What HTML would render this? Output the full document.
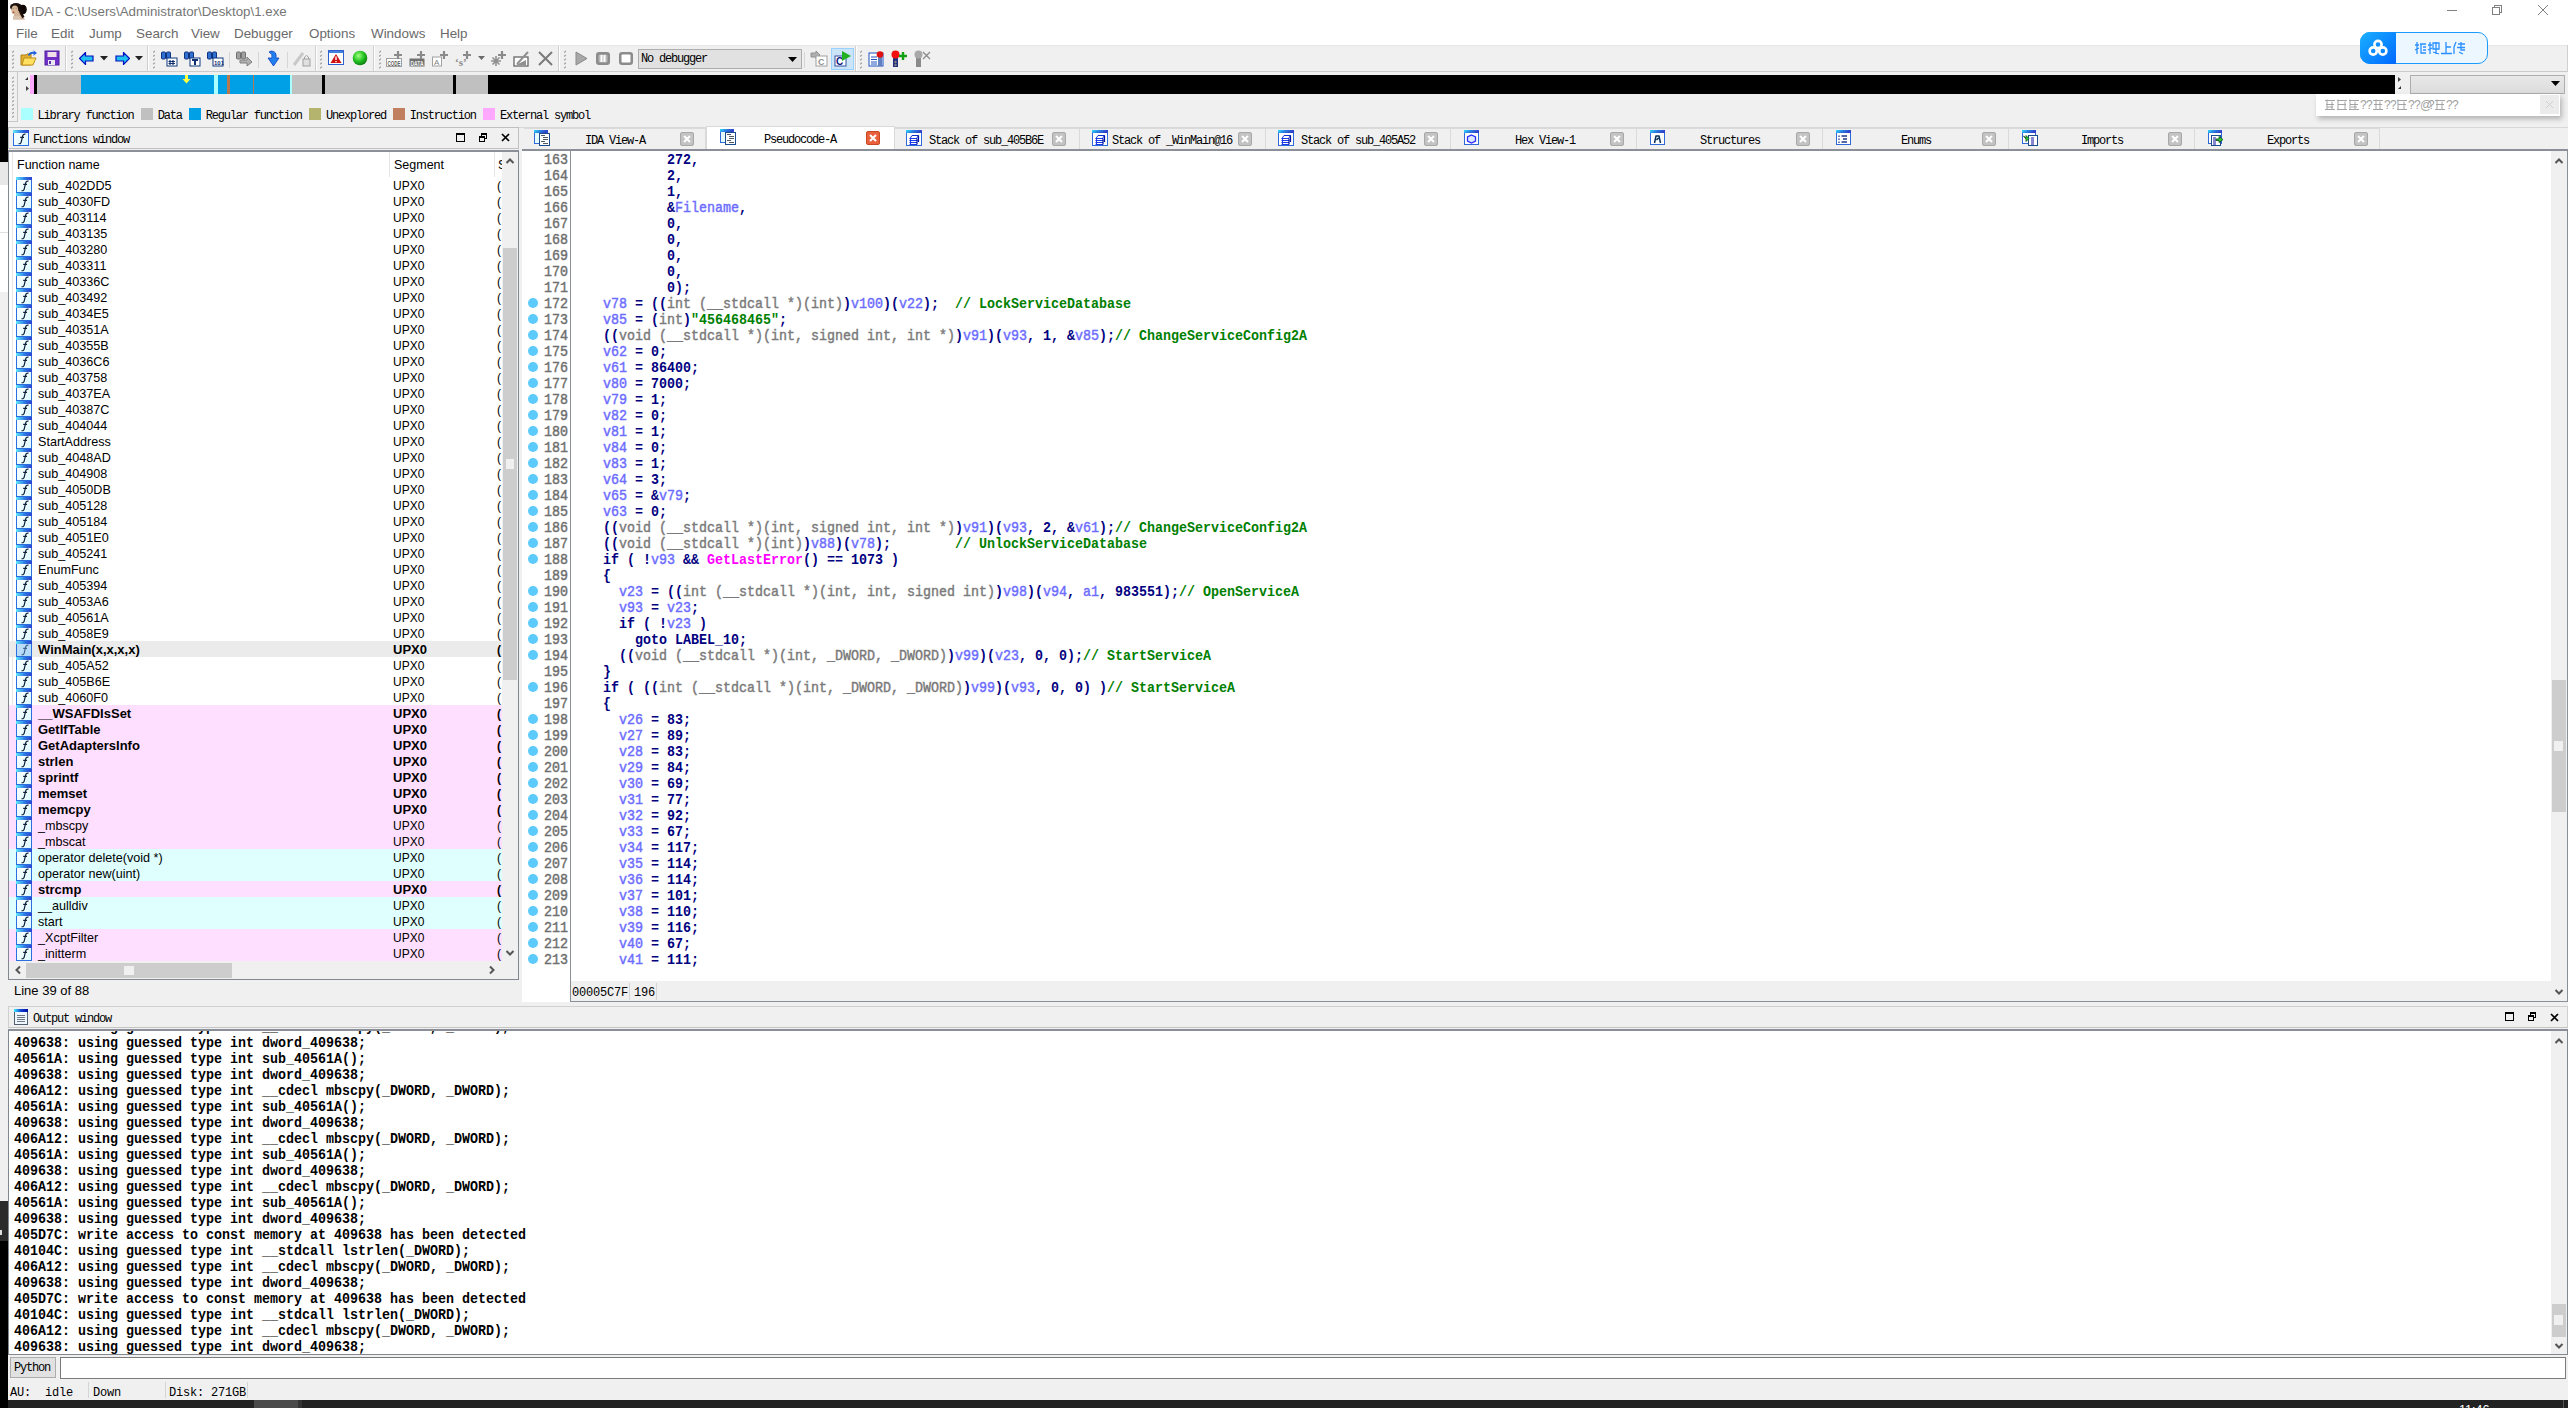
<!DOCTYPE html>
<html><head><meta charset="utf-8"><title>IDA</title><style>
*{box-sizing:border-box;margin:0;padding:0}
html,body{width:2568px;height:1408px;overflow:hidden;background:#f0f0f0}
body{position:relative;font-family:"Liberation Sans",sans-serif}
.a{position:absolute}
.t{position:absolute;white-space:pre}
.ui{font-family:"Liberation Sans",sans-serif;font-size:12px;line-height:16px;color:#000}
.sim{font-family:"Liberation Mono",monospace;font-size:12px;letter-spacing:-1.2px;line-height:16px;color:#000}
.st7{font-family:"Liberation Mono",monospace;font-size:12px;letter-spacing:-0.2px;line-height:16px;color:#000}
.code{font-family:"Liberation Mono",monospace;font-weight:bold;font-size:13.33px;line-height:16px;white-space:pre;transform:translateY(1px) scaleY(1.11);transform-origin:0 0}
.n{color:#000080}.v{color:#6c6cff;font-weight:normal;-webkit-text-stroke:0.4px #6c6cff}.ty{color:#7a7a7a;font-weight:normal;-webkit-text-stroke:0.4px #7a7a7a}.s{color:#008000}.c{color:#008000}.fn{color:#ff00ff}
.ln{color:#6e6e6e;font-weight:normal;-webkit-text-stroke:0.4px #6e6e6e}
.dot{position:absolute;width:10px;height:10px;border-radius:5px;background:#5ccbfb}
.fic{position:absolute;width:16px;height:16px;border:1px solid #2a6ee0;border-top:none;background:linear-gradient(135deg,#ffffff,#dcfaff)}
.fic:before{content:"";position:absolute;left:-1px;right:-1px;top:0;height:3px;background:linear-gradient(90deg,#60e8ff,#2a70e0 60%,#3040d0)}
.fic svg{position:absolute;left:2px;top:3px}
.sb{position:absolute;background:#f0f0f0}
.thumb{position:absolute;background:#cdcdcd}
.grip{position:absolute;background:#f0f0f0}
.grp{position:absolute;width:4px;background-image:linear-gradient(135deg,transparent 1.2px,#9c9c9c 1.2px,#9c9c9c 2.6px,transparent 2.6px);background-size:4px 3.9px}
.sep{position:absolute;width:1px;background:#d8d8d8}
</style></head><body>
<div class="a" style="left:8px;top:0px;width:2560px;height:45px;background:#fff"></div>
<svg class="a" style="left:6px;top:0px" width="24" height="22"><path d="M7 19.5Q8 16 8.5 13H14Q15.5 17 19.5 19.5Z" fill="#c8a488"/><ellipse cx="11" cy="17.2" rx="4" ry="2" fill="#d8c4ae"/><rect x="9" y="10" width="5" height="5" fill="#d0b090"/><ellipse cx="10" cy="7" rx="6" ry="4" fill="#1c100c"/><ellipse cx="17" cy="9.5" rx="3.8" ry="4.8" fill="#100806"/><path d="M13 8Q15 14 17.5 17.5" stroke="#1a0e0a" stroke-width="2.5" fill="none"/><ellipse cx="8.8" cy="10" rx="3.4" ry="4.6" fill="#d6b898"/><ellipse cx="7.5" cy="12.3" rx="1" ry="0.8" fill="#a04a38"/><path d="M6.5 8.3H8M9.5 8.3H11" stroke="#9a8070" stroke-width="0.8"/></svg>
<div class="t ui" style="left:31px;top:4px;font-size:13.3px;color:#767676">IDA - C:\Users\Administrator\Desktop\1.exe</div>
<div class="a" style="left:2447px;top:10px;width:10px;height:1px;background:#808080"></div>
<div class="a" style="left:2494px;top:5px;width:8px;height:8px;border:1px solid #808080"></div>
<div class="a" style="left:2492px;top:7px;width:8px;height:8px;border:1px solid #808080;background:#fff"></div>
<svg class="a" style="left:2537px;top:4px" width="12" height="12"><path d="M1 1L11 11M11 1L1 11" stroke="#808080" stroke-width="1"/></svg>
<div class="t ui" style="left:16px;top:26px;font-size:13.4px;color:#6a6a6a">File</div>
<div class="t ui" style="left:51px;top:26px;font-size:13.4px;color:#6a6a6a">Edit</div>
<div class="t ui" style="left:89px;top:26px;font-size:13.4px;color:#6a6a6a">Jump</div>
<div class="t ui" style="left:136px;top:26px;font-size:13.4px;color:#6a6a6a">Search</div>
<div class="t ui" style="left:191px;top:26px;font-size:13.4px;color:#6a6a6a">View</div>
<div class="t ui" style="left:234px;top:26px;font-size:13.4px;color:#6a6a6a">Debugger</div>
<div class="t ui" style="left:309px;top:26px;font-size:13.4px;color:#6a6a6a">Options</div>
<div class="t ui" style="left:371px;top:26px;font-size:13.4px;color:#6a6a6a">Windows</div>
<div class="t ui" style="left:440px;top:26px;font-size:13.4px;color:#6a6a6a">Help</div>
<div class="a" style="left:8px;top:45px;width:2560px;height:1px;background:#e6e6e6"></div>
<div class="a" style="left:8px;top:46px;width:2560px;height:25px;background:#f0f0f0"></div>
<div class="a" style="left:8px;top:71px;width:2560px;height:1px;background:#cacaca"></div>
<div class="a" style="left:2567px;top:45px;width:1px;height:27px;background:#d0d0d0"></div>
<div class="a" style="left:65px;top:46px;width:1px;height:25px;background:#cfcfcf"></div>
<div class="a" style="left:66px;top:46px;width:1px;height:25px;background:#ffffff"></div>
<div class="a" style="left:147px;top:46px;width:1px;height:25px;background:#cfcfcf"></div>
<div class="a" style="left:148px;top:46px;width:1px;height:25px;background:#ffffff"></div>
<div class="a" style="left:315px;top:46px;width:1px;height:25px;background:#cfcfcf"></div>
<div class="a" style="left:316px;top:46px;width:1px;height:25px;background:#ffffff"></div>
<div class="a" style="left:373px;top:46px;width:1px;height:25px;background:#cfcfcf"></div>
<div class="a" style="left:374px;top:46px;width:1px;height:25px;background:#ffffff"></div>
<div class="a" style="left:558px;top:46px;width:1px;height:25px;background:#cfcfcf"></div>
<div class="a" style="left:559px;top:46px;width:1px;height:25px;background:#ffffff"></div>
<div class="a" style="left:855px;top:46px;width:1px;height:25px;background:#cfcfcf"></div>
<div class="a" style="left:856px;top:46px;width:1px;height:25px;background:#ffffff"></div>
<div class="a" style="left:229px;top:52px;width:1px;height:16px;background:#d6d6d6"></div>
<div class="a" style="left:258px;top:52px;width:1px;height:16px;background:#d6d6d6"></div>
<div class="a" style="left:287px;top:52px;width:1px;height:16px;background:#d6d6d6"></div>
<div class="a" style="left:804px;top:52px;width:1px;height:16px;background:#d6d6d6"></div>
<svg class="a" style="left:12px;top:50px" width="4" height="21"><path d="M0.2 2.6L1.8 1.0M0.2 6.5L1.8 4.9M0.2 10.4L1.8 8.8M0.2 14.299999999999999L1.8 12.7M0.2 18.2L1.8 16.6" stroke="#a0a0a0" stroke-width="1.3"/></svg>
<svg class="a" style="left:71px;top:50px" width="4" height="21"><path d="M0.2 2.6L1.8 1.0M0.2 6.5L1.8 4.9M0.2 10.4L1.8 8.8M0.2 14.299999999999999L1.8 12.7M0.2 18.2L1.8 16.6" stroke="#a0a0a0" stroke-width="1.3"/></svg>
<svg class="a" style="left:153px;top:50px" width="4" height="21"><path d="M0.2 2.6L1.8 1.0M0.2 6.5L1.8 4.9M0.2 10.4L1.8 8.8M0.2 14.299999999999999L1.8 12.7M0.2 18.2L1.8 16.6" stroke="#a0a0a0" stroke-width="1.3"/></svg>
<svg class="a" style="left:320px;top:50px" width="4" height="21"><path d="M0.2 2.6L1.8 1.0M0.2 6.5L1.8 4.9M0.2 10.4L1.8 8.8M0.2 14.299999999999999L1.8 12.7M0.2 18.2L1.8 16.6" stroke="#a0a0a0" stroke-width="1.3"/></svg>
<svg class="a" style="left:379px;top:50px" width="4" height="21"><path d="M0.2 2.6L1.8 1.0M0.2 6.5L1.8 4.9M0.2 10.4L1.8 8.8M0.2 14.299999999999999L1.8 12.7M0.2 18.2L1.8 16.6" stroke="#a0a0a0" stroke-width="1.3"/></svg>
<svg class="a" style="left:564px;top:50px" width="4" height="21"><path d="M0.2 2.6L1.8 1.0M0.2 6.5L1.8 4.9M0.2 10.4L1.8 8.8M0.2 14.299999999999999L1.8 12.7M0.2 18.2L1.8 16.6" stroke="#a0a0a0" stroke-width="1.3"/></svg>
<svg class="a" style="left:860px;top:50px" width="4" height="21"><path d="M0.2 2.6L1.8 1.0M0.2 6.5L1.8 4.9M0.2 10.4L1.8 8.8M0.2 14.299999999999999L1.8 12.7M0.2 18.2L1.8 16.6" stroke="#a0a0a0" stroke-width="1.3"/></svg>
<svg class="a" style="left:20px;top:50px" width="18" height="17" viewBox="0 0 18 17"><path d="M1 5H6L7 4H11V15H1Z" fill="#e0b030" stroke="#b08010"/><path d="M2 15L4 8H16L13 15Z" fill="#ffe060" stroke="#c09020"/><path d="M8 5Q10 1 14 2L13 0L17 3L13 6L14 4Q11 3 9 6Z" fill="#2060e0"/></svg>
<svg class="a" style="left:44px;top:50px" width="17" height="17" viewBox="0 0 17 17"><rect x="1" y="1" width="14" height="14" fill="#7030c8" stroke="#5020a0"/><rect x="3.5" y="2" width="9" height="5" fill="#f0e0e8"/><rect x="4" y="10" width="7" height="5" fill="#e8e8f0"/><rect x="5" y="11" width="2" height="3" fill="#6030b0"/></svg>
<svg class="a" style="left:79px;top:52px" width="15" height="13" viewBox="0 0 15 13"><path d="M0.5 6.5L6.5 0.5V4H14V9H6.5V12.5Z" fill="#20c0f0" stroke="#0010c0" stroke-width="1.2"/></svg>
<svg class="a" style="left:115px;top:52px" width="15" height="13" viewBox="0 0 15 13"><path d="M14.5 6.5L8.5 0.5V4H1V9H8.5V12.5Z" fill="#20c0f0" stroke="#0010c0" stroke-width="1.2"/></svg>
<svg class="a" style="left:100px;top:56px" width="9" height="5" viewBox="0 0 9 5"><path d="M0 0H8L4 4.5Z" fill="#222"/></svg>
<svg class="a" style="left:135px;top:56px" width="9" height="5" viewBox="0 0 9 5"><path d="M0 0H8L4 4.5Z" fill="#222"/></svg>
<svg class="a" style="left:161px;top:50px" width="17" height="17" viewBox="0 0 17 17"><rect x="0.5" y="2" width="4" height="7" rx="1" fill="#3070d0" stroke="#103080"/><rect x="5.5" y="2" width="4" height="7" rx="1" fill="#3070d0" stroke="#103080"/><rect x="6" y="8" width="10" height="8" fill="#fff" stroke="#103880"/><path d="M9 10V15M12 10V15M7.5 11.5H14M7.5 13.5H14" stroke="#103070" stroke-width="1.2"/></svg>
<svg class="a" style="left:184px;top:50px" width="17" height="17" viewBox="0 0 17 17"><rect x="0.5" y="2" width="4" height="7" rx="1" fill="#3070d0" stroke="#103080"/><rect x="5.5" y="2" width="4" height="7" rx="1" fill="#3070d0" stroke="#103080"/><rect x="6" y="8" width="10" height="8" fill="#fff" stroke="#103880"/><path d="M8 10H14M11 10V15" stroke="#103070" stroke-width="2"/></svg>
<svg class="a" style="left:207px;top:50px" width="17" height="17" viewBox="0 0 17 17"><rect x="0.5" y="2" width="4" height="7" rx="1" fill="#3070d0" stroke="#103080"/><rect x="5.5" y="2" width="4" height="7" rx="1" fill="#3070d0" stroke="#103080"/><rect x="6" y="8" width="10" height="8" fill="#fff" stroke="#103880"/><text x="7" y="15" font-size="6" font-family="Liberation Sans" font-weight="bold" fill="#103070">101</text></svg>
<svg class="a" style="left:236px;top:50px" width="17" height="17" viewBox="0 0 17 17"><rect x="0.5" y="2" width="4" height="7" rx="1" fill="#a0a0a0" stroke="#707070"/><rect x="5.5" y="2" width="4" height="7" rx="1" fill="#a0a0a0" stroke="#707070"/><path d="M4 10H11V7L16 12L11 16V13H4Z" fill="#b0b0b0" stroke="#808080"/></svg>
<svg class="a" style="left:266px;top:50px" width="15" height="17" viewBox="0 0 15 17"><path d="M5 1Q11 1 10 8H13L7.5 16L2 8H6Q7 4 3 2Z" fill="#2080f0" stroke="#1040c0" stroke-width="0.8"/></svg>
<svg class="a" style="left:293px;top:50px" width="18" height="17" viewBox="0 0 18 17"><path d="M1 15L10 3" stroke="#c8c8c8" stroke-width="3"/><rect x="10" y="9" width="7" height="7" fill="#e0e0e0" stroke="#a0a0a0"/><path d="M11.5 9V7Q13.5 4 15.5 7V9" fill="none" stroke="#a0a0a0"/></svg>
<svg class="a" style="left:328px;top:50px" width="17" height="16" viewBox="0 0 17 16"><rect x="0.5" y="0.5" width="15" height="14" fill="#fff" stroke="#3060d0"/><rect x="1" y="1" width="14" height="2" fill="#4080e0"/><path d="M8 4L13.5 13H2.5Z" fill="#d01010"/><rect x="7.3" y="6.5" width="1.4" height="3.5" fill="#fff"/><rect x="7.3" y="11" width="1.4" height="1.2" fill="#fff"/></svg>
<svg class="a" style="left:352px;top:50px" width="16" height="16" viewBox="0 0 16 16"><defs><radialGradient id="gg" cx="40%" cy="35%" r="65%"><stop offset="0" stop-color="#a0ff80"/><stop offset="0.6" stop-color="#20c020"/><stop offset="1" stop-color="#108010"/></radialGradient></defs><circle cx="8" cy="8" r="7.3" fill="url(#gg)"/></svg>
<svg class="a" style="left:386px;top:50px" width="18" height="17" viewBox="0 0 18 17"><rect x="0.5" y="8.5" width="15" height="8" fill="#fff" stroke="#a0a0a0"/><text x="1.5" y="15.5" font-size="7" textLength="13" lengthAdjust="spacingAndGlyphs" font-family="Liberation Sans" font-weight="bold" fill="#606060">CODE</text><path d="M12 1V9M8 5H16" stroke="#8a8a8a" stroke-width="2.2"/></svg>
<svg class="a" style="left:409px;top:50px" width="18" height="17" viewBox="0 0 18 17"><rect x="0.5" y="8.5" width="15" height="8" fill="#707070"/><text x="1.5" y="15.5" font-size="7" textLength="13" lengthAdjust="spacingAndGlyphs" font-family="Liberation Sans" font-weight="bold" fill="#f0f0f0">DATA</text><path d="M12 1V9M8 5H16" stroke="#8a8a8a" stroke-width="2.2"/></svg>
<svg class="a" style="left:432px;top:50px" width="18" height="17" viewBox="0 0 18 17"><rect x="0.5" y="7" width="9" height="9" fill="#fff" stroke="#a0a0a0"/><text x="2" y="15" font-size="8" font-family="Liberation Sans" fill="#808080">A</text><path d="M12 1V9M8 5H16" stroke="#8a8a8a" stroke-width="2.2"/></svg>
<svg class="a" style="left:455px;top:50px" width="18" height="17" viewBox="0 0 18 17"><text x="0" y="16" font-size="11" font-family="Liberation Serif" font-weight="bold" fill="#8a8a8a">‘s’</text><path d="M12 1V9M8 5H16" stroke="#8a8a8a" stroke-width="2.2"/></svg>
<svg class="a" style="left:478px;top:56px" width="8" height="5" viewBox="0 0 8 5"><path d="M0 0H7L3.5 4Z" fill="#6a6a6a"/></svg>
<svg class="a" style="left:490px;top:50px" width="18" height="17" viewBox="0 0 18 17"><path d="M6 6V16M1 11H11M2.5 7.5L9.5 14.5M9.5 7.5L2.5 14.5" stroke="#909090" stroke-width="1.6"/><path d="M12 1V9M8 5H16" stroke="#8a8a8a" stroke-width="2.2"/></svg>
<svg class="a" style="left:513px;top:50px" width="18" height="17" viewBox="0 0 18 17"><rect x="1" y="7" width="14" height="9" fill="#fff" stroke="#707070" stroke-width="1.4"/><path d="M4 14L15 2" stroke="#909090" stroke-width="2"/><path d="M3 15H13V10Z" fill="#909090"/></svg>
<svg class="a" style="left:537px;top:50px" width="17" height="17" viewBox="0 0 17 17"><path d="M2 2L15 15M15 2L2 15" stroke="#7a7a7a" stroke-width="2"/></svg>
<svg class="a" style="left:574px;top:50px" width="15" height="17" viewBox="0 0 15 17"><path d="M2 2L13 8.5L2 15Z" fill="#a8a8a8" stroke="#8a8a8a"/></svg>
<svg class="a" style="left:595px;top:50px" width="16" height="17" viewBox="0 0 16 17"><rect x="1" y="2" width="14" height="13" rx="3" fill="#8c8c8c"/><rect x="3.5" y="4.5" width="9" height="8" rx="1.5" fill="#b8b8b8"/><rect x="5.5" y="5" width="2" height="7" fill="#fff"/><rect x="8.5" y="5" width="2" height="7" fill="#fff"/></svg>
<svg class="a" style="left:618px;top:50px" width="16" height="17" viewBox="0 0 16 17"><rect x="1" y="2" width="14" height="13" rx="3" fill="#8c8c8c"/><rect x="3.5" y="4.5" width="9" height="8" rx="1" fill="#fff"/></svg>
<div class="a" style="left:638px;top:49px;width:164px;height:20px;border:1px solid #adadad;background:#e1e1e1"></div>
<div class="t sim" style="left:641px;top:51px;">No debugger</div>
<svg class="a" style="left:788px;top:57px" width="9" height="6" viewBox="0 0 9 6"><path d="M0 0H9L4.5 5Z" fill="#000"/></svg>
<svg class="a" style="left:810px;top:50px" width="18" height="17" viewBox="0 0 18 17"><path d="M1 3H6V1L10 5L6 9V7H1Z" fill="#b0b0b0" stroke="#909090"/><rect x="6" y="6" width="11" height="10" fill="#fff" stroke="#a0a0a0"/><text x="8" y="15" font-size="9" font-weight="bold" font-family="Liberation Sans" fill="#909090">C</text></svg>
<div class="a" style="left:831px;top:48px;width:23px;height:22px;background:#cce4f7;border:1px solid #99d1ff"></div>
<svg class="a" style="left:834px;top:50px" width="18" height="17" viewBox="0 0 18 17"><rect x="1" y="6" width="11" height="10" fill="#fff" stroke="#3050a0"/><text x="2" y="15" font-size="10" font-weight="bold" font-family="Liberation Sans" fill="#102080">C</text><path d="M8 1L17 6L8 11Z" fill="#20b020"/></svg>
<svg class="a" style="left:868px;top:50px" width="18" height="17" viewBox="0 0 18 17"><rect x="1" y="3" width="14" height="13" fill="#fff" stroke="#2050c0"/><path d="M3 7H9M3 9.5H9M3 12H9M3 14H9" stroke="#2050c0"/><rect x="10" y="7" width="4" height="9" fill="#6080c0"/><circle cx="12" cy="4.5" r="3.3" fill="#e01010"/></svg>
<svg class="a" style="left:891px;top:50px" width="18" height="17" viewBox="0 0 18 17"><rect x="2" y="6" width="5" height="11" fill="#203080"/><circle cx="4.5" cy="4.5" r="4" fill="#f01010"/><circle cx="4.5" cy="12" r="1.2" fill="#808080"/><circle cx="4.5" cy="15" r="1.2" fill="#808080"/><path d="M12 2V10M8 6H16" stroke="#10a010" stroke-width="2.4"/></svg>
<svg class="a" style="left:914px;top:50px" width="18" height="17" viewBox="0 0 18 17"><rect x="2" y="6" width="5" height="11" fill="#8a8a8a"/><circle cx="4.5" cy="4.5" r="4" fill="#a8a8a8"/><path d="M9 2L16 9M16 2L9 9" stroke="#8a8a8a" stroke-width="1.3"/></svg>
<div class="a" style="left:8px;top:72px;width:10px;height:50px;border-right:1px solid #c8c8c8;border-bottom:1px solid #c8c8c8"></div>
<svg class="a" style="left:12px;top:76px" width="4" height="44"><path d="M0.2 2.6L1.8 1.0M0.2 6.5L1.8 4.9M0.2 10.4L1.8 8.8M0.2 14.299999999999999L1.8 12.7M0.2 18.2L1.8 16.6M0.2 22.1L1.8 20.5M0.2 26.0L1.8 24.4M0.2 29.900000000000002L1.8 28.3M0.2 33.8L1.8 32.2M0.2 37.7L1.8 36.1M0.2 41.6L1.8 40.0" stroke="#a0a0a0" stroke-width="1.3"/></svg>
<svg class="a" style="left:24px;top:76px" width="6" height="16"><path d="M1 4L4 1L4 4Z" fill="#333"/><path d="M2 10L5 12.5L2 15Z" fill="#444"/></svg>
<div class="a" style="left:30px;top:75px;width:4px;height:19px;background:#ffa8ff"></div>
<div class="a" style="left:34px;top:75px;width:3px;height:19px;background:#000"></div>
<div class="a" style="left:37px;top:75px;width:44px;height:19px;background:#c0c0c0"></div>
<div class="a" style="left:81px;top:75px;width:133px;height:19px;background:#00a0e6"></div>
<div class="a" style="left:214px;top:75px;width:4px;height:19px;background:#aaffff"></div>
<div class="a" style="left:218px;top:75px;width:72px;height:19px;background:#00a0e6"></div>
<div class="a" style="left:227px;top:75px;width:3px;height:19px;background:#b87850"></div>
<div class="a" style="left:253px;top:75px;width:1px;height:19px;background:#b87850"></div>
<div class="a" style="left:290px;top:75px;width:2px;height:19px;background:#aaffff"></div>
<div class="a" style="left:292px;top:75px;width:30px;height:19px;background:#c0c0c0"></div>
<div class="a" style="left:322px;top:75px;width:3px;height:19px;background:#000"></div>
<div class="a" style="left:325px;top:75px;width:128px;height:19px;background:#c0c0c0"></div>
<div class="a" style="left:453px;top:75px;width:3px;height:19px;background:#000"></div>
<div class="a" style="left:456px;top:75px;width:32px;height:19px;background:#c0c0c0"></div>
<div class="a" style="left:488px;top:75px;width:1907px;height:19px;background:#000"></div>
<svg class="a" style="left:182px;top:75px" width="9" height="9"><path d="M3 0H6V4H8.5L4.5 8.5L0.5 4H3Z" fill="#ffff40"/></svg>
<svg class="a" style="left:2397px;top:76px" width="6" height="16"><path d="M1 1L4 3.5L1 6Z" fill="#444"/><path d="M1 13L4 10L4 13Z" fill="#333"/></svg>
<div class="a" style="left:2410px;top:75px;width:155px;height:19px;border:1px solid #adadad;background:linear-gradient(#e8e8e8,#dcdcdc)"></div>
<svg class="a" style="left:2551px;top:81px" width="9" height="6"><path d="M0 0H9L4.5 5Z" fill="#000"/></svg>
<div class="a" style="left:21px;top:108px;width:12px;height:12px;background:#aaffff"></div>
<div class="t sim" style="left:37.6px;top:108px;">Library function</div>
<div class="a" style="left:141px;top:108px;width:12px;height:12px;background:#c0c0c0"></div>
<div class="t sim" style="left:157.7px;top:108px;">Data</div>
<div class="a" style="left:189px;top:108px;width:12px;height:12px;background:#00a0e6"></div>
<div class="t sim" style="left:205.8px;top:108px;">Regular function</div>
<div class="a" style="left:309px;top:108px;width:12px;height:12px;background:#b4b46e"></div>
<div class="t sim" style="left:326px;top:108px;">Unexplored</div>
<div class="a" style="left:393px;top:108px;width:12px;height:12px;background:#c08060"></div>
<div class="t sim" style="left:409.7px;top:108px;">Instruction</div>
<div class="a" style="left:483px;top:108px;width:12px;height:12px;background:#ffa8ff"></div>
<div class="t sim" style="left:500px;top:108px;">External symbol</div>
<div class="a" style="left:8px;top:127px;width:2560px;height:1px;background:#d8d8d8"></div>
<div class="a" style="left:2360px;top:32px;width:128px;height:32px;border-radius:10px;background:#edf7ff;border:1.5px solid #1a9cff"></div>
<div class="a" style="left:2360px;top:32px;width:36px;height:32px;border-radius:10px 0 0 10px;background:linear-gradient(135deg,#1ab0ff,#0068ff)"></div>
<svg class="a" style="left:2367px;top:38px" width="22" height="20"><g fill="none" stroke="#fff" stroke-width="2.6"><circle cx="11" cy="6.5" r="3.6"/><circle cx="6.2" cy="13" r="3.6"/><circle cx="15.8" cy="13" r="3.6"/></g></svg>
<svg class="a" style="left:2414px;top:41px" width="52" height="14"><g stroke="#2a90ff" stroke-width="1.3" fill="none"><path d="M1 4H5M3 1V13M1 9L5 7M6 3H12M7 3V12H12M9 6H12M9 9H12"/><path d="M14 4H18M16 1V13M14 9L18 7M19 2H25V8H19ZM22 1V13M19 11L25 13"/><path d="M32 1V12M32 6H37M27 12.5H38"/><path d="M42 1L40 6V13M44 3H51M43 6.5H51M47 1V9H51M45 11L49 13"/></g></svg>
<div class="a" style="left:2316px;top:94px;width:244px;height:22px;background:#fff;box-shadow:2px 3px 5px rgba(0,0,0,0.25)"></div>
<div class="a" style="left:2540px;top:95px;width:19px;height:19px;background:#ebebeb"></div>
<svg class="a" style="left:2545px;top:100px" width="9" height="9"><path d="M1 1L8 8M8 1L1 8" stroke="#d0d0d0" stroke-width="1"/></svg>
<svg class="a" style="left:2322px;top:98px" width="145" height="14"><g stroke="#a4a4a4" stroke-width="1" fill="none"><path d="M3 2.5H13 M4 6.5H12 M3 11.5H13 M5 1.5V11.5 M10 3.5V11.5 M5 9.0H11"/><path d="M15 2.5H25 M16 6.5H24 M15 11.5H25 M16 1.5V11.5 M23 3.5V11.5"/><path d="M27 2.5H37 M28 6.5H36 M27 11.5H37 M28 1.5V11.5 M33 3.5V11.5 M29 9.0H35"/><path d="M51 2.5H61 M52 6.5H60 M51 11.5H61 M54 1.5V11.5 M58 3.5V11.5"/><path d="M75 2.5H85 M76 6.5H84 M75 11.5H85 M76 1.5V11.5 M82 3.5V11.5"/><path d="M113 2.5H123 M114 6.5H122 M113 11.5H123 M115 1.5V11.5 M120 3.5V11.5"/></g><text x="38" y="11" font-family="Liberation Sans" font-size="12" fill="#a0a0a0">?</text><text x="44" y="11" font-family="Liberation Sans" font-size="12" fill="#a0a0a0">?</text><text x="62" y="11" font-family="Liberation Sans" font-size="12" fill="#a0a0a0">?</text><text x="68" y="11" font-family="Liberation Sans" font-size="12" fill="#a0a0a0">?</text><text x="86" y="11" font-family="Liberation Sans" font-size="12" fill="#a0a0a0">?</text><text x="92" y="11" font-family="Liberation Sans" font-size="12" fill="#a0a0a0">?</text><text x="98" y="11" font-family="Liberation Sans" font-size="12" fill="#a0a0a0">@</text><text x="106" y="11" font-family="Liberation Sans" font-size="12" fill="#a0a0a0">?</text><text x="124" y="11" font-family="Liberation Sans" font-size="12" fill="#a0a0a0">?</text><text x="130" y="11" font-family="Liberation Sans" font-size="12" fill="#a0a0a0">?</text></svg>
<div class="a" style="left:8px;top:127px;width:511px;height:22px;background:#f0f0f0;border:1px solid #c0c0c0"></div>
<div class="fic" style="left:13px;top:130px"><svg width="12" height="12"><path d="M9.5 1.2Q7.2 0.6 6.6 3.2L5.2 9.2Q4.7 11.2 2.6 10.6M4.2 4.4H8" fill="none" stroke="#10203a" stroke-width="1.2"/></svg></div>
<div class="t sim" style="left:33px;top:132px;">Functions window</div>
<div class="a" style="left:456px;top:133px;width:9px;height:9px;border:1px solid #000;border-top:2px solid #000"></div>
<div class="a" style="left:481px;top:133px;width:6px;height:6px;border:1px solid #000;border-top:2px solid #000"></div>
<div class="a" style="left:479px;top:136px;width:6px;height:6px;border:1px solid #000;border-top:2px solid #000;background:#f0f0f0"></div>
<svg class="a" style="left:501px;top:133px" width="9" height="9"><path d="M1 1L8 8M8 1L1 8" stroke="#000" stroke-width="1.7"/></svg>
<div class="a" style="left:8px;top:150px;width:511px;height:830px;background:#fff;border:1px solid #828790;border-top:2px solid #8a8f98"></div>
<div class="a" style="left:12px;top:152px;width:1px;height:809px;background:#e6e6e6"></div>
<div class="t ui" style="left:17px;top:157px;font-size:12.5px">Function name</div>
<div class="t ui" style="left:394px;top:157px;font-size:12.5px">Segment</div>
<div class="t ui" style="left:498px;top:157px;font-size:12.5px;width:4px;overflow:hidden">S</div>
<div class="a" style="left:389px;top:152px;width:1px;height:25px;background:#e5e5e5"></div>
<div class="a" style="left:494px;top:152px;width:1px;height:25px;background:#e5e5e5"></div>
<div class="fic" style="left:16px;top:177px"><svg width="12" height="12"><path d="M9.5 1.2Q7.2 0.6 6.6 3.2L5.2 9.2Q4.7 11.2 2.6 10.6M4.2 4.4H8" fill="none" stroke="#10203a" stroke-width="1.2"/></svg></div>
<div class="t ui" style="left:38px;top:178px;font-size:12.6px;">sub_402DD5</div>
<div class="t ui" style="left:393px;top:178px;">UPX0</div>
<div class="t ui" style="left:497px;top:178px;width:5px;overflow:hidden;">(</div>
<div class="fic" style="left:16px;top:193px"><svg width="12" height="12"><path d="M9.5 1.2Q7.2 0.6 6.6 3.2L5.2 9.2Q4.7 11.2 2.6 10.6M4.2 4.4H8" fill="none" stroke="#10203a" stroke-width="1.2"/></svg></div>
<div class="t ui" style="left:38px;top:194px;font-size:12.6px;">sub_4030FD</div>
<div class="t ui" style="left:393px;top:194px;">UPX0</div>
<div class="t ui" style="left:497px;top:194px;width:5px;overflow:hidden;">(</div>
<div class="fic" style="left:16px;top:209px"><svg width="12" height="12"><path d="M9.5 1.2Q7.2 0.6 6.6 3.2L5.2 9.2Q4.7 11.2 2.6 10.6M4.2 4.4H8" fill="none" stroke="#10203a" stroke-width="1.2"/></svg></div>
<div class="t ui" style="left:38px;top:210px;font-size:12.6px;">sub_403114</div>
<div class="t ui" style="left:393px;top:210px;">UPX0</div>
<div class="t ui" style="left:497px;top:210px;width:5px;overflow:hidden;">(</div>
<div class="fic" style="left:16px;top:225px"><svg width="12" height="12"><path d="M9.5 1.2Q7.2 0.6 6.6 3.2L5.2 9.2Q4.7 11.2 2.6 10.6M4.2 4.4H8" fill="none" stroke="#10203a" stroke-width="1.2"/></svg></div>
<div class="t ui" style="left:38px;top:226px;font-size:12.6px;">sub_403135</div>
<div class="t ui" style="left:393px;top:226px;">UPX0</div>
<div class="t ui" style="left:497px;top:226px;width:5px;overflow:hidden;">(</div>
<div class="fic" style="left:16px;top:241px"><svg width="12" height="12"><path d="M9.5 1.2Q7.2 0.6 6.6 3.2L5.2 9.2Q4.7 11.2 2.6 10.6M4.2 4.4H8" fill="none" stroke="#10203a" stroke-width="1.2"/></svg></div>
<div class="t ui" style="left:38px;top:242px;font-size:12.6px;">sub_403280</div>
<div class="t ui" style="left:393px;top:242px;">UPX0</div>
<div class="t ui" style="left:497px;top:242px;width:5px;overflow:hidden;">(</div>
<div class="fic" style="left:16px;top:257px"><svg width="12" height="12"><path d="M9.5 1.2Q7.2 0.6 6.6 3.2L5.2 9.2Q4.7 11.2 2.6 10.6M4.2 4.4H8" fill="none" stroke="#10203a" stroke-width="1.2"/></svg></div>
<div class="t ui" style="left:38px;top:258px;font-size:12.6px;">sub_403311</div>
<div class="t ui" style="left:393px;top:258px;">UPX0</div>
<div class="t ui" style="left:497px;top:258px;width:5px;overflow:hidden;">(</div>
<div class="fic" style="left:16px;top:273px"><svg width="12" height="12"><path d="M9.5 1.2Q7.2 0.6 6.6 3.2L5.2 9.2Q4.7 11.2 2.6 10.6M4.2 4.4H8" fill="none" stroke="#10203a" stroke-width="1.2"/></svg></div>
<div class="t ui" style="left:38px;top:274px;font-size:12.6px;">sub_40336C</div>
<div class="t ui" style="left:393px;top:274px;">UPX0</div>
<div class="t ui" style="left:497px;top:274px;width:5px;overflow:hidden;">(</div>
<div class="fic" style="left:16px;top:289px"><svg width="12" height="12"><path d="M9.5 1.2Q7.2 0.6 6.6 3.2L5.2 9.2Q4.7 11.2 2.6 10.6M4.2 4.4H8" fill="none" stroke="#10203a" stroke-width="1.2"/></svg></div>
<div class="t ui" style="left:38px;top:290px;font-size:12.6px;">sub_403492</div>
<div class="t ui" style="left:393px;top:290px;">UPX0</div>
<div class="t ui" style="left:497px;top:290px;width:5px;overflow:hidden;">(</div>
<div class="fic" style="left:16px;top:305px"><svg width="12" height="12"><path d="M9.5 1.2Q7.2 0.6 6.6 3.2L5.2 9.2Q4.7 11.2 2.6 10.6M4.2 4.4H8" fill="none" stroke="#10203a" stroke-width="1.2"/></svg></div>
<div class="t ui" style="left:38px;top:306px;font-size:12.6px;">sub_4034E5</div>
<div class="t ui" style="left:393px;top:306px;">UPX0</div>
<div class="t ui" style="left:497px;top:306px;width:5px;overflow:hidden;">(</div>
<div class="fic" style="left:16px;top:321px"><svg width="12" height="12"><path d="M9.5 1.2Q7.2 0.6 6.6 3.2L5.2 9.2Q4.7 11.2 2.6 10.6M4.2 4.4H8" fill="none" stroke="#10203a" stroke-width="1.2"/></svg></div>
<div class="t ui" style="left:38px;top:322px;font-size:12.6px;">sub_40351A</div>
<div class="t ui" style="left:393px;top:322px;">UPX0</div>
<div class="t ui" style="left:497px;top:322px;width:5px;overflow:hidden;">(</div>
<div class="fic" style="left:16px;top:337px"><svg width="12" height="12"><path d="M9.5 1.2Q7.2 0.6 6.6 3.2L5.2 9.2Q4.7 11.2 2.6 10.6M4.2 4.4H8" fill="none" stroke="#10203a" stroke-width="1.2"/></svg></div>
<div class="t ui" style="left:38px;top:338px;font-size:12.6px;">sub_40355B</div>
<div class="t ui" style="left:393px;top:338px;">UPX0</div>
<div class="t ui" style="left:497px;top:338px;width:5px;overflow:hidden;">(</div>
<div class="fic" style="left:16px;top:353px"><svg width="12" height="12"><path d="M9.5 1.2Q7.2 0.6 6.6 3.2L5.2 9.2Q4.7 11.2 2.6 10.6M4.2 4.4H8" fill="none" stroke="#10203a" stroke-width="1.2"/></svg></div>
<div class="t ui" style="left:38px;top:354px;font-size:12.6px;">sub_4036C6</div>
<div class="t ui" style="left:393px;top:354px;">UPX0</div>
<div class="t ui" style="left:497px;top:354px;width:5px;overflow:hidden;">(</div>
<div class="fic" style="left:16px;top:369px"><svg width="12" height="12"><path d="M9.5 1.2Q7.2 0.6 6.6 3.2L5.2 9.2Q4.7 11.2 2.6 10.6M4.2 4.4H8" fill="none" stroke="#10203a" stroke-width="1.2"/></svg></div>
<div class="t ui" style="left:38px;top:370px;font-size:12.6px;">sub_403758</div>
<div class="t ui" style="left:393px;top:370px;">UPX0</div>
<div class="t ui" style="left:497px;top:370px;width:5px;overflow:hidden;">(</div>
<div class="fic" style="left:16px;top:385px"><svg width="12" height="12"><path d="M9.5 1.2Q7.2 0.6 6.6 3.2L5.2 9.2Q4.7 11.2 2.6 10.6M4.2 4.4H8" fill="none" stroke="#10203a" stroke-width="1.2"/></svg></div>
<div class="t ui" style="left:38px;top:386px;font-size:12.6px;">sub_4037EA</div>
<div class="t ui" style="left:393px;top:386px;">UPX0</div>
<div class="t ui" style="left:497px;top:386px;width:5px;overflow:hidden;">(</div>
<div class="fic" style="left:16px;top:401px"><svg width="12" height="12"><path d="M9.5 1.2Q7.2 0.6 6.6 3.2L5.2 9.2Q4.7 11.2 2.6 10.6M4.2 4.4H8" fill="none" stroke="#10203a" stroke-width="1.2"/></svg></div>
<div class="t ui" style="left:38px;top:402px;font-size:12.6px;">sub_40387C</div>
<div class="t ui" style="left:393px;top:402px;">UPX0</div>
<div class="t ui" style="left:497px;top:402px;width:5px;overflow:hidden;">(</div>
<div class="fic" style="left:16px;top:417px"><svg width="12" height="12"><path d="M9.5 1.2Q7.2 0.6 6.6 3.2L5.2 9.2Q4.7 11.2 2.6 10.6M4.2 4.4H8" fill="none" stroke="#10203a" stroke-width="1.2"/></svg></div>
<div class="t ui" style="left:38px;top:418px;font-size:12.6px;">sub_404044</div>
<div class="t ui" style="left:393px;top:418px;">UPX0</div>
<div class="t ui" style="left:497px;top:418px;width:5px;overflow:hidden;">(</div>
<div class="fic" style="left:16px;top:433px"><svg width="12" height="12"><path d="M9.5 1.2Q7.2 0.6 6.6 3.2L5.2 9.2Q4.7 11.2 2.6 10.6M4.2 4.4H8" fill="none" stroke="#10203a" stroke-width="1.2"/></svg></div>
<div class="t ui" style="left:38px;top:434px;font-size:12.6px;">StartAddress</div>
<div class="t ui" style="left:393px;top:434px;">UPX0</div>
<div class="t ui" style="left:497px;top:434px;width:5px;overflow:hidden;">(</div>
<div class="fic" style="left:16px;top:449px"><svg width="12" height="12"><path d="M9.5 1.2Q7.2 0.6 6.6 3.2L5.2 9.2Q4.7 11.2 2.6 10.6M4.2 4.4H8" fill="none" stroke="#10203a" stroke-width="1.2"/></svg></div>
<div class="t ui" style="left:38px;top:450px;font-size:12.6px;">sub_4048AD</div>
<div class="t ui" style="left:393px;top:450px;">UPX0</div>
<div class="t ui" style="left:497px;top:450px;width:5px;overflow:hidden;">(</div>
<div class="fic" style="left:16px;top:465px"><svg width="12" height="12"><path d="M9.5 1.2Q7.2 0.6 6.6 3.2L5.2 9.2Q4.7 11.2 2.6 10.6M4.2 4.4H8" fill="none" stroke="#10203a" stroke-width="1.2"/></svg></div>
<div class="t ui" style="left:38px;top:466px;font-size:12.6px;">sub_404908</div>
<div class="t ui" style="left:393px;top:466px;">UPX0</div>
<div class="t ui" style="left:497px;top:466px;width:5px;overflow:hidden;">(</div>
<div class="fic" style="left:16px;top:481px"><svg width="12" height="12"><path d="M9.5 1.2Q7.2 0.6 6.6 3.2L5.2 9.2Q4.7 11.2 2.6 10.6M4.2 4.4H8" fill="none" stroke="#10203a" stroke-width="1.2"/></svg></div>
<div class="t ui" style="left:38px;top:482px;font-size:12.6px;">sub_4050DB</div>
<div class="t ui" style="left:393px;top:482px;">UPX0</div>
<div class="t ui" style="left:497px;top:482px;width:5px;overflow:hidden;">(</div>
<div class="fic" style="left:16px;top:497px"><svg width="12" height="12"><path d="M9.5 1.2Q7.2 0.6 6.6 3.2L5.2 9.2Q4.7 11.2 2.6 10.6M4.2 4.4H8" fill="none" stroke="#10203a" stroke-width="1.2"/></svg></div>
<div class="t ui" style="left:38px;top:498px;font-size:12.6px;">sub_405128</div>
<div class="t ui" style="left:393px;top:498px;">UPX0</div>
<div class="t ui" style="left:497px;top:498px;width:5px;overflow:hidden;">(</div>
<div class="fic" style="left:16px;top:513px"><svg width="12" height="12"><path d="M9.5 1.2Q7.2 0.6 6.6 3.2L5.2 9.2Q4.7 11.2 2.6 10.6M4.2 4.4H8" fill="none" stroke="#10203a" stroke-width="1.2"/></svg></div>
<div class="t ui" style="left:38px;top:514px;font-size:12.6px;">sub_405184</div>
<div class="t ui" style="left:393px;top:514px;">UPX0</div>
<div class="t ui" style="left:497px;top:514px;width:5px;overflow:hidden;">(</div>
<div class="fic" style="left:16px;top:529px"><svg width="12" height="12"><path d="M9.5 1.2Q7.2 0.6 6.6 3.2L5.2 9.2Q4.7 11.2 2.6 10.6M4.2 4.4H8" fill="none" stroke="#10203a" stroke-width="1.2"/></svg></div>
<div class="t ui" style="left:38px;top:530px;font-size:12.6px;">sub_4051E0</div>
<div class="t ui" style="left:393px;top:530px;">UPX0</div>
<div class="t ui" style="left:497px;top:530px;width:5px;overflow:hidden;">(</div>
<div class="fic" style="left:16px;top:545px"><svg width="12" height="12"><path d="M9.5 1.2Q7.2 0.6 6.6 3.2L5.2 9.2Q4.7 11.2 2.6 10.6M4.2 4.4H8" fill="none" stroke="#10203a" stroke-width="1.2"/></svg></div>
<div class="t ui" style="left:38px;top:546px;font-size:12.6px;">sub_405241</div>
<div class="t ui" style="left:393px;top:546px;">UPX0</div>
<div class="t ui" style="left:497px;top:546px;width:5px;overflow:hidden;">(</div>
<div class="fic" style="left:16px;top:561px"><svg width="12" height="12"><path d="M9.5 1.2Q7.2 0.6 6.6 3.2L5.2 9.2Q4.7 11.2 2.6 10.6M4.2 4.4H8" fill="none" stroke="#10203a" stroke-width="1.2"/></svg></div>
<div class="t ui" style="left:38px;top:562px;font-size:12.6px;">EnumFunc</div>
<div class="t ui" style="left:393px;top:562px;">UPX0</div>
<div class="t ui" style="left:497px;top:562px;width:5px;overflow:hidden;">(</div>
<div class="fic" style="left:16px;top:577px"><svg width="12" height="12"><path d="M9.5 1.2Q7.2 0.6 6.6 3.2L5.2 9.2Q4.7 11.2 2.6 10.6M4.2 4.4H8" fill="none" stroke="#10203a" stroke-width="1.2"/></svg></div>
<div class="t ui" style="left:38px;top:578px;font-size:12.6px;">sub_405394</div>
<div class="t ui" style="left:393px;top:578px;">UPX0</div>
<div class="t ui" style="left:497px;top:578px;width:5px;overflow:hidden;">(</div>
<div class="fic" style="left:16px;top:593px"><svg width="12" height="12"><path d="M9.5 1.2Q7.2 0.6 6.6 3.2L5.2 9.2Q4.7 11.2 2.6 10.6M4.2 4.4H8" fill="none" stroke="#10203a" stroke-width="1.2"/></svg></div>
<div class="t ui" style="left:38px;top:594px;font-size:12.6px;">sub_4053A6</div>
<div class="t ui" style="left:393px;top:594px;">UPX0</div>
<div class="t ui" style="left:497px;top:594px;width:5px;overflow:hidden;">(</div>
<div class="fic" style="left:16px;top:609px"><svg width="12" height="12"><path d="M9.5 1.2Q7.2 0.6 6.6 3.2L5.2 9.2Q4.7 11.2 2.6 10.6M4.2 4.4H8" fill="none" stroke="#10203a" stroke-width="1.2"/></svg></div>
<div class="t ui" style="left:38px;top:610px;font-size:12.6px;">sub_40561A</div>
<div class="t ui" style="left:393px;top:610px;">UPX0</div>
<div class="t ui" style="left:497px;top:610px;width:5px;overflow:hidden;">(</div>
<div class="fic" style="left:16px;top:625px"><svg width="12" height="12"><path d="M9.5 1.2Q7.2 0.6 6.6 3.2L5.2 9.2Q4.7 11.2 2.6 10.6M4.2 4.4H8" fill="none" stroke="#10203a" stroke-width="1.2"/></svg></div>
<div class="t ui" style="left:38px;top:626px;font-size:12.6px;">sub_4058E9</div>
<div class="t ui" style="left:393px;top:626px;">UPX0</div>
<div class="t ui" style="left:497px;top:626px;width:5px;overflow:hidden;">(</div>
<div class="a" style="left:9px;top:641px;width:493px;height:16px;background:#ebebeb"></div>
<div class="fic" style="left:16px;top:641px"><svg width="12" height="12"><path d="M9.5 1.2Q7.2 0.6 6.6 3.2L5.2 9.2Q4.7 11.2 2.6 10.6M4.2 4.4H8" fill="none" stroke="#10203a" stroke-width="1.2"/></svg></div>
<div class="t ui" style="left:38px;top:642px;font-weight:bold;font-size:13px;">WinMain(x,x,x,x)</div>
<div class="t ui" style="left:393px;top:642px;font-weight:bold;font-size:13px;">UPX0</div>
<div class="t ui" style="left:497px;top:642px;width:5px;overflow:hidden;font-weight:bold;">(</div>
<div class="fic" style="left:16px;top:657px"><svg width="12" height="12"><path d="M9.5 1.2Q7.2 0.6 6.6 3.2L5.2 9.2Q4.7 11.2 2.6 10.6M4.2 4.4H8" fill="none" stroke="#10203a" stroke-width="1.2"/></svg></div>
<div class="t ui" style="left:38px;top:658px;font-size:12.6px;">sub_405A52</div>
<div class="t ui" style="left:393px;top:658px;">UPX0</div>
<div class="t ui" style="left:497px;top:658px;width:5px;overflow:hidden;">(</div>
<div class="fic" style="left:16px;top:673px"><svg width="12" height="12"><path d="M9.5 1.2Q7.2 0.6 6.6 3.2L5.2 9.2Q4.7 11.2 2.6 10.6M4.2 4.4H8" fill="none" stroke="#10203a" stroke-width="1.2"/></svg></div>
<div class="t ui" style="left:38px;top:674px;font-size:12.6px;">sub_405B6E</div>
<div class="t ui" style="left:393px;top:674px;">UPX0</div>
<div class="t ui" style="left:497px;top:674px;width:5px;overflow:hidden;">(</div>
<div class="fic" style="left:16px;top:689px"><svg width="12" height="12"><path d="M9.5 1.2Q7.2 0.6 6.6 3.2L5.2 9.2Q4.7 11.2 2.6 10.6M4.2 4.4H8" fill="none" stroke="#10203a" stroke-width="1.2"/></svg></div>
<div class="t ui" style="left:38px;top:690px;font-size:12.6px;">sub_4060F0</div>
<div class="t ui" style="left:393px;top:690px;">UPX0</div>
<div class="t ui" style="left:497px;top:690px;width:5px;overflow:hidden;">(</div>
<div class="a" style="left:9px;top:705px;width:493px;height:16px;background:#ffdfff"></div>
<div class="fic" style="left:16px;top:705px"><svg width="12" height="12"><path d="M9.5 1.2Q7.2 0.6 6.6 3.2L5.2 9.2Q4.7 11.2 2.6 10.6M4.2 4.4H8" fill="none" stroke="#10203a" stroke-width="1.2"/></svg></div>
<div class="t ui" style="left:38px;top:706px;font-weight:bold;font-size:13px;">__WSAFDIsSet</div>
<div class="t ui" style="left:393px;top:706px;font-weight:bold;font-size:13px;">UPX0</div>
<div class="t ui" style="left:497px;top:706px;width:5px;overflow:hidden;font-weight:bold;">(</div>
<div class="a" style="left:9px;top:721px;width:493px;height:16px;background:#ffdfff"></div>
<div class="fic" style="left:16px;top:721px"><svg width="12" height="12"><path d="M9.5 1.2Q7.2 0.6 6.6 3.2L5.2 9.2Q4.7 11.2 2.6 10.6M4.2 4.4H8" fill="none" stroke="#10203a" stroke-width="1.2"/></svg></div>
<div class="t ui" style="left:38px;top:722px;font-weight:bold;font-size:13px;">GetIfTable</div>
<div class="t ui" style="left:393px;top:722px;font-weight:bold;font-size:13px;">UPX0</div>
<div class="t ui" style="left:497px;top:722px;width:5px;overflow:hidden;font-weight:bold;">(</div>
<div class="a" style="left:9px;top:737px;width:493px;height:16px;background:#ffdfff"></div>
<div class="fic" style="left:16px;top:737px"><svg width="12" height="12"><path d="M9.5 1.2Q7.2 0.6 6.6 3.2L5.2 9.2Q4.7 11.2 2.6 10.6M4.2 4.4H8" fill="none" stroke="#10203a" stroke-width="1.2"/></svg></div>
<div class="t ui" style="left:38px;top:738px;font-weight:bold;font-size:13px;">GetAdaptersInfo</div>
<div class="t ui" style="left:393px;top:738px;font-weight:bold;font-size:13px;">UPX0</div>
<div class="t ui" style="left:497px;top:738px;width:5px;overflow:hidden;font-weight:bold;">(</div>
<div class="a" style="left:9px;top:753px;width:493px;height:16px;background:#ffdfff"></div>
<div class="fic" style="left:16px;top:753px"><svg width="12" height="12"><path d="M9.5 1.2Q7.2 0.6 6.6 3.2L5.2 9.2Q4.7 11.2 2.6 10.6M4.2 4.4H8" fill="none" stroke="#10203a" stroke-width="1.2"/></svg></div>
<div class="t ui" style="left:38px;top:754px;font-weight:bold;font-size:13px;">strlen</div>
<div class="t ui" style="left:393px;top:754px;font-weight:bold;font-size:13px;">UPX0</div>
<div class="t ui" style="left:497px;top:754px;width:5px;overflow:hidden;font-weight:bold;">(</div>
<div class="a" style="left:9px;top:769px;width:493px;height:16px;background:#ffdfff"></div>
<div class="fic" style="left:16px;top:769px"><svg width="12" height="12"><path d="M9.5 1.2Q7.2 0.6 6.6 3.2L5.2 9.2Q4.7 11.2 2.6 10.6M4.2 4.4H8" fill="none" stroke="#10203a" stroke-width="1.2"/></svg></div>
<div class="t ui" style="left:38px;top:770px;font-weight:bold;font-size:13px;">sprintf</div>
<div class="t ui" style="left:393px;top:770px;font-weight:bold;font-size:13px;">UPX0</div>
<div class="t ui" style="left:497px;top:770px;width:5px;overflow:hidden;font-weight:bold;">(</div>
<div class="a" style="left:9px;top:785px;width:493px;height:16px;background:#ffdfff"></div>
<div class="fic" style="left:16px;top:785px"><svg width="12" height="12"><path d="M9.5 1.2Q7.2 0.6 6.6 3.2L5.2 9.2Q4.7 11.2 2.6 10.6M4.2 4.4H8" fill="none" stroke="#10203a" stroke-width="1.2"/></svg></div>
<div class="t ui" style="left:38px;top:786px;font-weight:bold;font-size:13px;">memset</div>
<div class="t ui" style="left:393px;top:786px;font-weight:bold;font-size:13px;">UPX0</div>
<div class="t ui" style="left:497px;top:786px;width:5px;overflow:hidden;font-weight:bold;">(</div>
<div class="a" style="left:9px;top:801px;width:493px;height:16px;background:#ffdfff"></div>
<div class="fic" style="left:16px;top:801px"><svg width="12" height="12"><path d="M9.5 1.2Q7.2 0.6 6.6 3.2L5.2 9.2Q4.7 11.2 2.6 10.6M4.2 4.4H8" fill="none" stroke="#10203a" stroke-width="1.2"/></svg></div>
<div class="t ui" style="left:38px;top:802px;font-weight:bold;font-size:13px;">memcpy</div>
<div class="t ui" style="left:393px;top:802px;font-weight:bold;font-size:13px;">UPX0</div>
<div class="t ui" style="left:497px;top:802px;width:5px;overflow:hidden;font-weight:bold;">(</div>
<div class="a" style="left:9px;top:817px;width:493px;height:16px;background:#ffdfff"></div>
<div class="fic" style="left:16px;top:817px"><svg width="12" height="12"><path d="M9.5 1.2Q7.2 0.6 6.6 3.2L5.2 9.2Q4.7 11.2 2.6 10.6M4.2 4.4H8" fill="none" stroke="#10203a" stroke-width="1.2"/></svg></div>
<div class="t ui" style="left:38px;top:818px;font-size:12.6px;">_mbscpy</div>
<div class="t ui" style="left:393px;top:818px;">UPX0</div>
<div class="t ui" style="left:497px;top:818px;width:5px;overflow:hidden;">(</div>
<div class="a" style="left:9px;top:833px;width:493px;height:16px;background:#ffdfff"></div>
<div class="fic" style="left:16px;top:833px"><svg width="12" height="12"><path d="M9.5 1.2Q7.2 0.6 6.6 3.2L5.2 9.2Q4.7 11.2 2.6 10.6M4.2 4.4H8" fill="none" stroke="#10203a" stroke-width="1.2"/></svg></div>
<div class="t ui" style="left:38px;top:834px;font-size:12.6px;">_mbscat</div>
<div class="t ui" style="left:393px;top:834px;">UPX0</div>
<div class="t ui" style="left:497px;top:834px;width:5px;overflow:hidden;">(</div>
<div class="a" style="left:9px;top:849px;width:493px;height:16px;background:#dfffff"></div>
<div class="fic" style="left:16px;top:849px"><svg width="12" height="12"><path d="M9.5 1.2Q7.2 0.6 6.6 3.2L5.2 9.2Q4.7 11.2 2.6 10.6M4.2 4.4H8" fill="none" stroke="#10203a" stroke-width="1.2"/></svg></div>
<div class="t ui" style="left:38px;top:850px;font-size:12.6px;">operator delete(void *)</div>
<div class="t ui" style="left:393px;top:850px;">UPX0</div>
<div class="t ui" style="left:497px;top:850px;width:5px;overflow:hidden;">(</div>
<div class="a" style="left:9px;top:865px;width:493px;height:16px;background:#dfffff"></div>
<div class="fic" style="left:16px;top:865px"><svg width="12" height="12"><path d="M9.5 1.2Q7.2 0.6 6.6 3.2L5.2 9.2Q4.7 11.2 2.6 10.6M4.2 4.4H8" fill="none" stroke="#10203a" stroke-width="1.2"/></svg></div>
<div class="t ui" style="left:38px;top:866px;font-size:12.6px;">operator new(uint)</div>
<div class="t ui" style="left:393px;top:866px;">UPX0</div>
<div class="t ui" style="left:497px;top:866px;width:5px;overflow:hidden;">(</div>
<div class="a" style="left:9px;top:881px;width:493px;height:16px;background:#ffdfff"></div>
<div class="fic" style="left:16px;top:881px"><svg width="12" height="12"><path d="M9.5 1.2Q7.2 0.6 6.6 3.2L5.2 9.2Q4.7 11.2 2.6 10.6M4.2 4.4H8" fill="none" stroke="#10203a" stroke-width="1.2"/></svg></div>
<div class="t ui" style="left:38px;top:882px;font-weight:bold;font-size:13px;">strcmp</div>
<div class="t ui" style="left:393px;top:882px;font-weight:bold;font-size:13px;">UPX0</div>
<div class="t ui" style="left:497px;top:882px;width:5px;overflow:hidden;font-weight:bold;">(</div>
<div class="a" style="left:9px;top:897px;width:493px;height:16px;background:#dfffff"></div>
<div class="fic" style="left:16px;top:897px"><svg width="12" height="12"><path d="M9.5 1.2Q7.2 0.6 6.6 3.2L5.2 9.2Q4.7 11.2 2.6 10.6M4.2 4.4H8" fill="none" stroke="#10203a" stroke-width="1.2"/></svg></div>
<div class="t ui" style="left:38px;top:898px;font-size:12.6px;">__aulldiv</div>
<div class="t ui" style="left:393px;top:898px;">UPX0</div>
<div class="t ui" style="left:497px;top:898px;width:5px;overflow:hidden;">(</div>
<div class="a" style="left:9px;top:913px;width:493px;height:16px;background:#dfffff"></div>
<div class="fic" style="left:16px;top:913px"><svg width="12" height="12"><path d="M9.5 1.2Q7.2 0.6 6.6 3.2L5.2 9.2Q4.7 11.2 2.6 10.6M4.2 4.4H8" fill="none" stroke="#10203a" stroke-width="1.2"/></svg></div>
<div class="t ui" style="left:38px;top:914px;font-size:12.6px;">start</div>
<div class="t ui" style="left:393px;top:914px;">UPX0</div>
<div class="t ui" style="left:497px;top:914px;width:5px;overflow:hidden;">(</div>
<div class="a" style="left:9px;top:929px;width:493px;height:16px;background:#ffdfff"></div>
<div class="fic" style="left:16px;top:929px"><svg width="12" height="12"><path d="M9.5 1.2Q7.2 0.6 6.6 3.2L5.2 9.2Q4.7 11.2 2.6 10.6M4.2 4.4H8" fill="none" stroke="#10203a" stroke-width="1.2"/></svg></div>
<div class="t ui" style="left:38px;top:930px;font-size:12.6px;">_XcptFilter</div>
<div class="t ui" style="left:393px;top:930px;">UPX0</div>
<div class="t ui" style="left:497px;top:930px;width:5px;overflow:hidden;">(</div>
<div class="a" style="left:9px;top:945px;width:493px;height:16px;background:#ffdfff"></div>
<div class="fic" style="left:16px;top:945px"><svg width="12" height="12"><path d="M9.5 1.2Q7.2 0.6 6.6 3.2L5.2 9.2Q4.7 11.2 2.6 10.6M4.2 4.4H8" fill="none" stroke="#10203a" stroke-width="1.2"/></svg></div>
<div class="t ui" style="left:38px;top:946px;font-size:12.6px;">_initterm</div>
<div class="t ui" style="left:393px;top:946px;">UPX0</div>
<div class="t ui" style="left:497px;top:946px;width:5px;overflow:hidden;">(</div>
<div class="a" style="left:17px;top:644px;width:14px;height:12px;background:rgba(120,180,240,0.45)"></div>
<div class="a" style="left:502px;top:152px;width:16px;height:809px;background:#f0f0f0"></div>
<svg class="a" style="left:505px;top:157px" width="10" height="7"><path d="M1.5 6L5 2.5L8.5 6" fill="none" stroke="#555" stroke-width="2"/></svg>
<svg class="a" style="left:505px;top:950px" width="10" height="7"><path d="M1.5 1L5 4.5L8.5 1" fill="none" stroke="#555" stroke-width="2"/></svg>
<div class="a" style="left:503px;top:248px;width:14px;height:432px;background:#cdcdcd"></div>
<div class="a" style="left:506px;top:459px;width:8px;height:10px;background:#f0f0f0"></div>
<div class="a" style="left:9px;top:961px;width:493px;height:18px;background:#f0f0f0"></div>
<div class="a" style="left:502px;top:961px;width:16px;height:18px;background:#f0f0f0"></div>
<svg class="a" style="left:14px;top:965px" width="7" height="10"><path d="M6 1.5L2.5 5L6 8.5" fill="none" stroke="#555" stroke-width="2"/></svg>
<svg class="a" style="left:489px;top:965px" width="7" height="10"><path d="M1 1.5L4.5 5L1 8.5" fill="none" stroke="#555" stroke-width="2"/></svg>
<div class="a" style="left:26px;top:963px;width:206px;height:15px;background:#cdcdcd"></div>
<div class="a" style="left:124px;top:966px;width:10px;height:9px;background:#f0f0f0"></div>
<div class="t ui" style="left:14px;top:983px;font-size:13px">Line 39 of 88</div>
<div class="a" style="left:522px;top:128px;width:2046px;height:22px;background:#f0f0f0"></div>
<div class="a" style="left:524px;top:128px;width:182px;height:22px;background:#f0f0f0;border-top:1px solid #dadada;border-right:1px solid #dadada"></div>
<svg class="a" style="left:534px;top:130px" width="17" height="17"><defs><linearGradient id="tbg534" x1="0" y1="0" x2="1" y2="0.3"><stop offset="0" stop-color="#30e0ff"/><stop offset="0.5" stop-color="#2a80e0"/><stop offset="1" stop-color="#3040c8"/></linearGradient></defs><rect x="0.5" y="0.5" width="13" height="13" fill="#e6fdff" stroke="#2f6ad8"/><rect x="0" y="0" width="14" height="3" fill="url(#tbg534)"/><rect x="5.5" y="3.5" width="10" height="12" fill="#fff" stroke="#1d4c8c"/><path d="M7 5.5H11M9 7.5H14M9 9.5H14M7 11.5H11M9 13.5H14" stroke="#505a64" stroke-width="1"/></svg>
<div class="t sim" style="left:585px;top:133px;">IDA View-A</div>
<div class="a" style="left:680px;top:132px;width:14px;height:14px;background:#c3c3c3;border:1px solid #a8a8a8;border-radius:2px"></div>
<svg class="a" style="left:683px;top:135px" width="8" height="8"><path d="M1 1L7 7M7 1L1 7" stroke="#fff" stroke-width="2"/></svg>
<div class="a" style="left:706px;top:126px;width:189px;height:25px;background:#fff;border:1px solid #d9d9d9;border-bottom:none"></div>
<svg class="a" style="left:720px;top:129px" width="17" height="17"><defs><linearGradient id="tbg720" x1="0" y1="0" x2="1" y2="0.3"><stop offset="0" stop-color="#30e0ff"/><stop offset="0.5" stop-color="#2a80e0"/><stop offset="1" stop-color="#3040c8"/></linearGradient></defs><rect x="0.5" y="0.5" width="13" height="13" fill="#e6fdff" stroke="#2f6ad8"/><rect x="0" y="0" width="14" height="3" fill="url(#tbg720)"/><rect x="5.5" y="3.5" width="10" height="12" fill="#fff" stroke="#1d4c8c"/><path d="M7 5.5H11M9 7.5H14M9 9.5H14M7 11.5H11M9 13.5H14" stroke="#505a64" stroke-width="1"/></svg>
<div class="t sim" style="left:764px;top:132px;">Pseudocode-A</div>
<div class="a" style="left:866px;top:131px;width:14px;height:14px;background:#e8603c;border:1px solid #c84820;border-radius:2px"></div>
<svg class="a" style="left:869px;top:134px" width="8" height="8"><path d="M1 1L7 7M7 1L1 7" stroke="#fff" stroke-width="2"/></svg>
<div class="a" style="left:895px;top:128px;width:185px;height:22px;background:#f0f0f0;border-top:1px solid #dadada;border-right:1px solid #dadada"></div>
<svg class="a" style="left:906px;top:130px" width="17" height="17"><defs><linearGradient id="tbg906" x1="0" y1="0" x2="1" y2="0.3"><stop offset="0" stop-color="#30e0ff"/><stop offset="0.5" stop-color="#2a80e0"/><stop offset="1" stop-color="#3040c8"/></linearGradient></defs><rect x="0.5" y="0.5" width="15" height="15" fill="#fff" stroke="#2f6ad8"/><rect x="0" y="0" width="16" height="3" fill="url(#tbg906)"/><path d="M6 5.5H12.5M6 5.5L4 8.5M12.5 5.5L10.5 8.5" stroke="#1030d0" stroke-width="1" fill="#80f0ff"/><path d="M3.5 8.5H11M3.5 10.5H11M3.5 12.5H11M3.5 14.5H11" stroke="#1a3ae8" stroke-width="1.1"/><path d="M11 8.5V14.5M12.5 5.5V12" stroke="#0010a0" stroke-width="1.2"/><path d="M4.5 8.5V14.5" stroke="#1a3ae8" stroke-width="1.1"/></svg>
<div class="t sim" style="left:929px;top:133px;">Stack of sub_405B6E</div>
<div class="a" style="left:1052px;top:132px;width:14px;height:14px;background:#c3c3c3;border:1px solid #a8a8a8;border-radius:2px"></div>
<svg class="a" style="left:1055px;top:135px" width="8" height="8"><path d="M1 1L7 7M7 1L1 7" stroke="#fff" stroke-width="2"/></svg>
<div class="a" style="left:1080px;top:128px;width:186px;height:22px;background:#f0f0f0;border-top:1px solid #dadada;border-right:1px solid #dadada"></div>
<svg class="a" style="left:1092px;top:130px" width="17" height="17"><defs><linearGradient id="tbg1092" x1="0" y1="0" x2="1" y2="0.3"><stop offset="0" stop-color="#30e0ff"/><stop offset="0.5" stop-color="#2a80e0"/><stop offset="1" stop-color="#3040c8"/></linearGradient></defs><rect x="0.5" y="0.5" width="15" height="15" fill="#fff" stroke="#2f6ad8"/><rect x="0" y="0" width="16" height="3" fill="url(#tbg1092)"/><path d="M6 5.5H12.5M6 5.5L4 8.5M12.5 5.5L10.5 8.5" stroke="#1030d0" stroke-width="1" fill="#80f0ff"/><path d="M3.5 8.5H11M3.5 10.5H11M3.5 12.5H11M3.5 14.5H11" stroke="#1a3ae8" stroke-width="1.1"/><path d="M11 8.5V14.5M12.5 5.5V12" stroke="#0010a0" stroke-width="1.2"/><path d="M4.5 8.5V14.5" stroke="#1a3ae8" stroke-width="1.1"/></svg>
<div class="t sim" style="left:1112px;top:133px;">Stack of _WinMain@16</div>
<div class="a" style="left:1238px;top:132px;width:14px;height:14px;background:#c3c3c3;border:1px solid #a8a8a8;border-radius:2px"></div>
<svg class="a" style="left:1241px;top:135px" width="8" height="8"><path d="M1 1L7 7M7 1L1 7" stroke="#fff" stroke-width="2"/></svg>
<div class="a" style="left:1266px;top:128px;width:185px;height:22px;background:#f0f0f0;border-top:1px solid #dadada;border-right:1px solid #dadada"></div>
<svg class="a" style="left:1278px;top:130px" width="17" height="17"><defs><linearGradient id="tbg1278" x1="0" y1="0" x2="1" y2="0.3"><stop offset="0" stop-color="#30e0ff"/><stop offset="0.5" stop-color="#2a80e0"/><stop offset="1" stop-color="#3040c8"/></linearGradient></defs><rect x="0.5" y="0.5" width="15" height="15" fill="#fff" stroke="#2f6ad8"/><rect x="0" y="0" width="16" height="3" fill="url(#tbg1278)"/><path d="M6 5.5H12.5M6 5.5L4 8.5M12.5 5.5L10.5 8.5" stroke="#1030d0" stroke-width="1" fill="#80f0ff"/><path d="M3.5 8.5H11M3.5 10.5H11M3.5 12.5H11M3.5 14.5H11" stroke="#1a3ae8" stroke-width="1.1"/><path d="M11 8.5V14.5M12.5 5.5V12" stroke="#0010a0" stroke-width="1.2"/><path d="M4.5 8.5V14.5" stroke="#1a3ae8" stroke-width="1.1"/></svg>
<div class="t sim" style="left:1301px;top:133px;">Stack of sub_405A52</div>
<div class="a" style="left:1424px;top:132px;width:14px;height:14px;background:#c3c3c3;border:1px solid #a8a8a8;border-radius:2px"></div>
<svg class="a" style="left:1427px;top:135px" width="8" height="8"><path d="M1 1L7 7M7 1L1 7" stroke="#fff" stroke-width="2"/></svg>
<div class="a" style="left:1451px;top:128px;width:186px;height:22px;background:#f0f0f0;border-top:1px solid #dadada;border-right:1px solid #dadada"></div>
<svg class="a" style="left:1464px;top:130px" width="17" height="17"><defs><linearGradient id="tbg1464" x1="0" y1="0" x2="1" y2="0.3"><stop offset="0" stop-color="#30e0ff"/><stop offset="0.5" stop-color="#2a80e0"/><stop offset="1" stop-color="#3040c8"/></linearGradient></defs><rect x="0.5" y="0.5" width="14" height="14" fill="#fff" stroke="#2f6ad8"/><rect x="0" y="0" width="15" height="3" fill="url(#tbg1464)"/><path d="M7.5 5L11.5 7V11L7.5 13L3.5 11V7Z" fill="#dce8ff" stroke="#2a2aff" stroke-width="1.3"/></svg>
<div class="t sim" style="left:1515px;top:133px;">Hex View-1</div>
<div class="a" style="left:1610px;top:132px;width:14px;height:14px;background:#c3c3c3;border:1px solid #a8a8a8;border-radius:2px"></div>
<svg class="a" style="left:1613px;top:135px" width="8" height="8"><path d="M1 1L7 7M7 1L1 7" stroke="#fff" stroke-width="2"/></svg>
<div class="a" style="left:1637px;top:128px;width:186px;height:22px;background:#f0f0f0;border-top:1px solid #dadada;border-right:1px solid #dadada"></div>
<svg class="a" style="left:1650px;top:130px" width="17" height="17"><defs><linearGradient id="tbg1650" x1="0" y1="0" x2="1" y2="0.3"><stop offset="0" stop-color="#30e0ff"/><stop offset="0.5" stop-color="#2a80e0"/><stop offset="1" stop-color="#3040c8"/></linearGradient></defs><rect x="0.5" y="0.5" width="14" height="14" fill="#fff" stroke="#2f6ad8"/><rect x="0" y="0" width="15" height="3" fill="url(#tbg1650)"/><path d="M5.5 6H9.5M6 6L4.5 13M9 6L10.5 13M6.5 10L8.5 8" stroke="#08305a" stroke-width="1.5" fill="none"/></svg>
<div class="t sim" style="left:1700px;top:133px;">Structures</div>
<div class="a" style="left:1796px;top:132px;width:14px;height:14px;background:#c3c3c3;border:1px solid #a8a8a8;border-radius:2px"></div>
<svg class="a" style="left:1799px;top:135px" width="8" height="8"><path d="M1 1L7 7M7 1L1 7" stroke="#fff" stroke-width="2"/></svg>
<div class="a" style="left:1823px;top:128px;width:186px;height:22px;background:#f0f0f0;border-top:1px solid #dadada;border-right:1px solid #dadada"></div>
<svg class="a" style="left:1836px;top:130px" width="17" height="17"><defs><linearGradient id="tbg1836" x1="0" y1="0" x2="1" y2="0.3"><stop offset="0" stop-color="#30e0ff"/><stop offset="0.5" stop-color="#2a80e0"/><stop offset="1" stop-color="#3040c8"/></linearGradient></defs><rect x="0.5" y="0.5" width="14" height="14" fill="#fff" stroke="#2f6ad8"/><rect x="0" y="0" width="15" height="3" fill="url(#tbg1836)"/><path d="M3 5.5V7M3 8.5V10M3 11.5V13M5.5 6H11M7 9H11M5.5 12H11" stroke="#1d3a8c" stroke-width="1.3"/></svg>
<div class="t sim" style="left:1901px;top:133px;">Enums</div>
<div class="a" style="left:1982px;top:132px;width:14px;height:14px;background:#c3c3c3;border:1px solid #a8a8a8;border-radius:2px"></div>
<svg class="a" style="left:1985px;top:135px" width="8" height="8"><path d="M1 1L7 7M7 1L1 7" stroke="#fff" stroke-width="2"/></svg>
<div class="a" style="left:2009px;top:128px;width:186px;height:22px;background:#f0f0f0;border-top:1px solid #dadada;border-right:1px solid #dadada"></div>
<svg class="a" style="left:2022px;top:130px" width="17" height="17"><defs><linearGradient id="tbg2022" x1="0" y1="0" x2="1" y2="0.3"><stop offset="0" stop-color="#30e0ff"/><stop offset="0.5" stop-color="#2a80e0"/><stop offset="1" stop-color="#3040c8"/></linearGradient></defs><rect x="0.5" y="0.5" width="13" height="13" fill="#fff" stroke="#2f6ad8"/><rect x="0" y="0" width="14" height="3" fill="url(#tbg2022)"/><rect x="6.5" y="5.5" width="9" height="10" fill="#fff" stroke="#1d4c8c"/><path d="M9 8H12M9 10H12M9 12H12M9 14H12" stroke="#0a10a0" stroke-width="1"/><path d="M1.5 6L4 8V5.5L7 8.5L4 11.5V9Z" fill="#30d030" stroke="#064a10" stroke-width="0.8"/></svg>
<div class="t sim" style="left:2081px;top:133px;">Imports</div>
<div class="a" style="left:2168px;top:132px;width:14px;height:14px;background:#c3c3c3;border:1px solid #a8a8a8;border-radius:2px"></div>
<svg class="a" style="left:2171px;top:135px" width="8" height="8"><path d="M1 1L7 7M7 1L1 7" stroke="#fff" stroke-width="2"/></svg>
<div class="a" style="left:2195px;top:128px;width:185px;height:22px;background:#f0f0f0;border-top:1px solid #dadada;border-right:1px solid #dadada"></div>
<svg class="a" style="left:2208px;top:130px" width="17" height="17"><defs><linearGradient id="tbg2208" x1="0" y1="0" x2="1" y2="0.3"><stop offset="0" stop-color="#30e0ff"/><stop offset="0.5" stop-color="#2a80e0"/><stop offset="1" stop-color="#3040c8"/></linearGradient></defs><rect x="0.5" y="0.5" width="13" height="13" fill="#fff" stroke="#2f6ad8"/><rect x="0" y="0" width="14" height="3" fill="url(#tbg2208)"/><rect x="3.5" y="5.5" width="9" height="10" fill="#fff" stroke="#1d4c8c"/><path d="M5 8H8M5 10H8M5 12H8M5 14H8" stroke="#0a10a0" stroke-width="1"/><path d="M8 9L11 9V6.5L15 9.5L11 12.5V10.5H8Z" fill="#30d030" stroke="#064a10" stroke-width="0.8"/></svg>
<div class="t sim" style="left:2267px;top:133px;">Exports</div>
<div class="a" style="left:2354px;top:132px;width:14px;height:14px;background:#c3c3c3;border:1px solid #a8a8a8;border-radius:2px"></div>
<svg class="a" style="left:2357px;top:135px" width="8" height="8"><path d="M1 1L7 7M7 1L1 7" stroke="#fff" stroke-width="2"/></svg>
<div class="a" style="left:522px;top:150px;width:2046px;height:852px;background:#fff"></div>
<div class="a" style="left:522px;top:149px;width:2046px;height:2px;background:#8a8f98"></div>
<div class="a" style="left:2567px;top:149px;width:1px;height:853px;background:#8a8f98"></div>
<div class="a" style="left:570px;top:151px;width:1px;height:851px;background:#8a8f98"></div>
<div class="a" style="left:570px;top:1001px;width:1998px;height:1px;background:#8a8f98"></div>
<div class="t code ln" style="left:544px;top:151px">163</div>
<div class="t code" style="left:587px;top:151px"><span class="n">          272,</span></div>
<div class="t code ln" style="left:544px;top:167px">164</div>
<div class="t code" style="left:587px;top:167px"><span class="n">          2,</span></div>
<div class="t code ln" style="left:544px;top:183px">165</div>
<div class="t code" style="left:587px;top:183px"><span class="n">          1,</span></div>
<div class="t code ln" style="left:544px;top:199px">166</div>
<div class="t code" style="left:587px;top:199px"><span class="n">          &amp;</span><span class="v">Filename</span><span class="n">,</span></div>
<div class="t code ln" style="left:544px;top:215px">167</div>
<div class="t code" style="left:587px;top:215px"><span class="n">          0,</span></div>
<div class="t code ln" style="left:544px;top:231px">168</div>
<div class="t code" style="left:587px;top:231px"><span class="n">          0,</span></div>
<div class="t code ln" style="left:544px;top:247px">169</div>
<div class="t code" style="left:587px;top:247px"><span class="n">          0,</span></div>
<div class="t code ln" style="left:544px;top:263px">170</div>
<div class="t code" style="left:587px;top:263px"><span class="n">          0,</span></div>
<div class="t code ln" style="left:544px;top:279px">171</div>
<div class="t code" style="left:587px;top:279px"><span class="n">          0);</span></div>
<div class="dot" style="left:528px;top:298px"></div>
<div class="t code ln" style="left:544px;top:295px">172</div>
<div class="t code" style="left:587px;top:295px"><span class="n">  </span><span class="v">v78</span><span class="n"> = ((</span><span class="ty">int (__stdcall *)(int)</span><span class="n">)</span><span class="v">v100</span><span class="n">)(</span><span class="v">v22</span><span class="n">);  </span><span class="c">// LockServiceDatabase</span></div>
<div class="dot" style="left:528px;top:314px"></div>
<div class="t code ln" style="left:544px;top:311px">173</div>
<div class="t code" style="left:587px;top:311px"><span class="n">  </span><span class="v">v85</span><span class="n"> = (</span><span class="ty">int</span><span class="n">)</span><span class="s">"456468465"</span><span class="n">;</span></div>
<div class="dot" style="left:528px;top:330px"></div>
<div class="t code ln" style="left:544px;top:327px">174</div>
<div class="t code" style="left:587px;top:327px"><span class="n">  ((</span><span class="ty">void (__stdcall *)(int, signed int, int *)</span><span class="n">)</span><span class="v">v91</span><span class="n">)(</span><span class="v">v93</span><span class="n">, 1, &amp;</span><span class="v">v85</span><span class="n">);</span><span class="c">// ChangeServiceConfig2A</span></div>
<div class="dot" style="left:528px;top:346px"></div>
<div class="t code ln" style="left:544px;top:343px">175</div>
<div class="t code" style="left:587px;top:343px"><span class="n">  </span><span class="v">v62</span><span class="n"> = 0;</span></div>
<div class="dot" style="left:528px;top:362px"></div>
<div class="t code ln" style="left:544px;top:359px">176</div>
<div class="t code" style="left:587px;top:359px"><span class="n">  </span><span class="v">v61</span><span class="n"> = 86400;</span></div>
<div class="dot" style="left:528px;top:378px"></div>
<div class="t code ln" style="left:544px;top:375px">177</div>
<div class="t code" style="left:587px;top:375px"><span class="n">  </span><span class="v">v80</span><span class="n"> = 7000;</span></div>
<div class="dot" style="left:528px;top:394px"></div>
<div class="t code ln" style="left:544px;top:391px">178</div>
<div class="t code" style="left:587px;top:391px"><span class="n">  </span><span class="v">v79</span><span class="n"> = 1;</span></div>
<div class="dot" style="left:528px;top:410px"></div>
<div class="t code ln" style="left:544px;top:407px">179</div>
<div class="t code" style="left:587px;top:407px"><span class="n">  </span><span class="v">v82</span><span class="n"> = 0;</span></div>
<div class="dot" style="left:528px;top:426px"></div>
<div class="t code ln" style="left:544px;top:423px">180</div>
<div class="t code" style="left:587px;top:423px"><span class="n">  </span><span class="v">v81</span><span class="n"> = 1;</span></div>
<div class="dot" style="left:528px;top:442px"></div>
<div class="t code ln" style="left:544px;top:439px">181</div>
<div class="t code" style="left:587px;top:439px"><span class="n">  </span><span class="v">v84</span><span class="n"> = 0;</span></div>
<div class="dot" style="left:528px;top:458px"></div>
<div class="t code ln" style="left:544px;top:455px">182</div>
<div class="t code" style="left:587px;top:455px"><span class="n">  </span><span class="v">v83</span><span class="n"> = 1;</span></div>
<div class="dot" style="left:528px;top:474px"></div>
<div class="t code ln" style="left:544px;top:471px">183</div>
<div class="t code" style="left:587px;top:471px"><span class="n">  </span><span class="v">v64</span><span class="n"> = 3;</span></div>
<div class="dot" style="left:528px;top:490px"></div>
<div class="t code ln" style="left:544px;top:487px">184</div>
<div class="t code" style="left:587px;top:487px"><span class="n">  </span><span class="v">v65</span><span class="n"> = &amp;</span><span class="v">v79</span><span class="n">;</span></div>
<div class="dot" style="left:528px;top:506px"></div>
<div class="t code ln" style="left:544px;top:503px">185</div>
<div class="t code" style="left:587px;top:503px"><span class="n">  </span><span class="v">v63</span><span class="n"> = 0;</span></div>
<div class="dot" style="left:528px;top:522px"></div>
<div class="t code ln" style="left:544px;top:519px">186</div>
<div class="t code" style="left:587px;top:519px"><span class="n">  ((</span><span class="ty">void (__stdcall *)(int, signed int, int *)</span><span class="n">)</span><span class="v">v91</span><span class="n">)(</span><span class="v">v93</span><span class="n">, 2, &amp;</span><span class="v">v61</span><span class="n">);</span><span class="c">// ChangeServiceConfig2A</span></div>
<div class="dot" style="left:528px;top:538px"></div>
<div class="t code ln" style="left:544px;top:535px">187</div>
<div class="t code" style="left:587px;top:535px"><span class="n">  ((</span><span class="ty">void (__stdcall *)(int)</span><span class="n">)</span><span class="v">v88</span><span class="n">)(</span><span class="v">v78</span><span class="n">);        </span><span class="c">// UnlockServiceDatabase</span></div>
<div class="dot" style="left:528px;top:554px"></div>
<div class="t code ln" style="left:544px;top:551px">188</div>
<div class="t code" style="left:587px;top:551px"><span class="n">  if ( !</span><span class="v">v93</span><span class="n"> &amp;&amp; </span><span class="fn">GetLastError</span><span class="n">() == 1073 )</span></div>
<div class="t code ln" style="left:544px;top:567px">189</div>
<div class="t code" style="left:587px;top:567px"><span class="n">  {</span></div>
<div class="dot" style="left:528px;top:586px"></div>
<div class="t code ln" style="left:544px;top:583px">190</div>
<div class="t code" style="left:587px;top:583px"><span class="n">    </span><span class="v">v23</span><span class="n"> = ((</span><span class="ty">int (__stdcall *)(int, int, signed int)</span><span class="n">)</span><span class="v">v98</span><span class="n">)(</span><span class="v">v94</span><span class="n">, </span><span class="v">a1</span><span class="n">, 983551);</span><span class="c">// OpenServiceA</span></div>
<div class="dot" style="left:528px;top:602px"></div>
<div class="t code ln" style="left:544px;top:599px">191</div>
<div class="t code" style="left:587px;top:599px"><span class="n">    </span><span class="v">v93</span><span class="n"> = </span><span class="v">v23</span><span class="n">;</span></div>
<div class="dot" style="left:528px;top:618px"></div>
<div class="t code ln" style="left:544px;top:615px">192</div>
<div class="t code" style="left:587px;top:615px"><span class="n">    if ( !</span><span class="v">v23</span><span class="n"> )</span></div>
<div class="dot" style="left:528px;top:634px"></div>
<div class="t code ln" style="left:544px;top:631px">193</div>
<div class="t code" style="left:587px;top:631px"><span class="n">      goto LABEL_10;</span></div>
<div class="dot" style="left:528px;top:650px"></div>
<div class="t code ln" style="left:544px;top:647px">194</div>
<div class="t code" style="left:587px;top:647px"><span class="n">    ((</span><span class="ty">void (__stdcall *)(int, _DWORD, _DWORD)</span><span class="n">)</span><span class="v">v99</span><span class="n">)(</span><span class="v">v23</span><span class="n">, 0, 0);</span><span class="c">// StartServiceA</span></div>
<div class="t code ln" style="left:544px;top:663px">195</div>
<div class="t code" style="left:587px;top:663px"><span class="n">  }</span></div>
<div class="dot" style="left:528px;top:682px"></div>
<div class="t code ln" style="left:544px;top:679px">196</div>
<div class="t code" style="left:587px;top:679px"><span class="n">  if ( ((</span><span class="ty">int (__stdcall *)(int, _DWORD, _DWORD)</span><span class="n">)</span><span class="v">v99</span><span class="n">)(</span><span class="v">v93</span><span class="n">, 0, 0) )</span><span class="c">// StartServiceA</span></div>
<div class="t code ln" style="left:544px;top:695px">197</div>
<div class="t code" style="left:587px;top:695px"><span class="n">  {</span></div>
<div class="dot" style="left:528px;top:714px"></div>
<div class="t code ln" style="left:544px;top:711px">198</div>
<div class="t code" style="left:587px;top:711px"><span class="n">    </span><span class="v">v26</span><span class="n"> = 83;</span></div>
<div class="dot" style="left:528px;top:730px"></div>
<div class="t code ln" style="left:544px;top:727px">199</div>
<div class="t code" style="left:587px;top:727px"><span class="n">    </span><span class="v">v27</span><span class="n"> = 89;</span></div>
<div class="dot" style="left:528px;top:746px"></div>
<div class="t code ln" style="left:544px;top:743px">200</div>
<div class="t code" style="left:587px;top:743px"><span class="n">    </span><span class="v">v28</span><span class="n"> = 83;</span></div>
<div class="dot" style="left:528px;top:762px"></div>
<div class="t code ln" style="left:544px;top:759px">201</div>
<div class="t code" style="left:587px;top:759px"><span class="n">    </span><span class="v">v29</span><span class="n"> = 84;</span></div>
<div class="dot" style="left:528px;top:778px"></div>
<div class="t code ln" style="left:544px;top:775px">202</div>
<div class="t code" style="left:587px;top:775px"><span class="n">    </span><span class="v">v30</span><span class="n"> = 69;</span></div>
<div class="dot" style="left:528px;top:794px"></div>
<div class="t code ln" style="left:544px;top:791px">203</div>
<div class="t code" style="left:587px;top:791px"><span class="n">    </span><span class="v">v31</span><span class="n"> = 77;</span></div>
<div class="dot" style="left:528px;top:810px"></div>
<div class="t code ln" style="left:544px;top:807px">204</div>
<div class="t code" style="left:587px;top:807px"><span class="n">    </span><span class="v">v32</span><span class="n"> = 92;</span></div>
<div class="dot" style="left:528px;top:826px"></div>
<div class="t code ln" style="left:544px;top:823px">205</div>
<div class="t code" style="left:587px;top:823px"><span class="n">    </span><span class="v">v33</span><span class="n"> = 67;</span></div>
<div class="dot" style="left:528px;top:842px"></div>
<div class="t code ln" style="left:544px;top:839px">206</div>
<div class="t code" style="left:587px;top:839px"><span class="n">    </span><span class="v">v34</span><span class="n"> = 117;</span></div>
<div class="dot" style="left:528px;top:858px"></div>
<div class="t code ln" style="left:544px;top:855px">207</div>
<div class="t code" style="left:587px;top:855px"><span class="n">    </span><span class="v">v35</span><span class="n"> = 114;</span></div>
<div class="dot" style="left:528px;top:874px"></div>
<div class="t code ln" style="left:544px;top:871px">208</div>
<div class="t code" style="left:587px;top:871px"><span class="n">    </span><span class="v">v36</span><span class="n"> = 114;</span></div>
<div class="dot" style="left:528px;top:890px"></div>
<div class="t code ln" style="left:544px;top:887px">209</div>
<div class="t code" style="left:587px;top:887px"><span class="n">    </span><span class="v">v37</span><span class="n"> = 101;</span></div>
<div class="dot" style="left:528px;top:906px"></div>
<div class="t code ln" style="left:544px;top:903px">210</div>
<div class="t code" style="left:587px;top:903px"><span class="n">    </span><span class="v">v38</span><span class="n"> = 110;</span></div>
<div class="dot" style="left:528px;top:922px"></div>
<div class="t code ln" style="left:544px;top:919px">211</div>
<div class="t code" style="left:587px;top:919px"><span class="n">    </span><span class="v">v39</span><span class="n"> = 116;</span></div>
<div class="dot" style="left:528px;top:938px"></div>
<div class="t code ln" style="left:544px;top:935px">212</div>
<div class="t code" style="left:587px;top:935px"><span class="n">    </span><span class="v">v40</span><span class="n"> = 67;</span></div>
<div class="dot" style="left:528px;top:954px"></div>
<div class="t code ln" style="left:544px;top:951px">213</div>
<div class="t code" style="left:587px;top:951px"><span class="n">    </span><span class="v">v41</span><span class="n"> = 111;</span></div>
<div class="a" style="left:571px;top:981px;width:1980px;height:20px;background:#f0f0f0"></div>
<div class="t st7" style="left:572px;top:985px;">00005C7F</div>
<div class="a" style="left:629px;top:983px;width:1px;height:17px;background:#d5d5d5"></div>
<div class="t st7" style="left:634px;top:985px;">196</div>
<div class="a" style="left:656px;top:983px;width:1px;height:17px;background:#d5d5d5"></div>
<div class="a" style="left:2551px;top:151px;width:16px;height:850px;background:#f0f0f0"></div>
<svg class="a" style="left:2554px;top:157px" width="10" height="7"><path d="M1.5 6L5 2.5L8.5 6" fill="none" stroke="#555" stroke-width="2"/></svg>
<svg class="a" style="left:2554px;top:989px" width="10" height="7"><path d="M1.5 1L5 4.5L8.5 1" fill="none" stroke="#555" stroke-width="2"/></svg>
<div class="a" style="left:2552px;top:680px;width:14px;height:132px;background:#cdcdcd"></div>
<div class="a" style="left:2554px;top:741px;width:9px;height:10px;background:#f0f0f0"></div>
<div class="a" style="left:8px;top:1002px;width:2560px;height:4px;background:#f0f0f0"></div>
<div class="a" style="left:8px;top:1006px;width:2560px;height:22px;background:#f0f0f0;border:1px solid #d0d0d0;border-bottom:1px solid #c4c4c4"></div>
<svg class="a" style="left:14px;top:1009px" width="15" height="16"><defs><linearGradient id="otg"><stop offset="0" stop-color="#40f0ff"/><stop offset="0.5" stop-color="#1040d0"/><stop offset="1" stop-color="#0010a0"/></linearGradient></defs><rect x="0.5" y="0.5" width="13" height="15" fill="#eef6ff" stroke="#506070"/><rect x="0" y="0" width="14" height="3" fill="url(#otg)"/><path d="M3 6.5H11M3 8.5H11M3 10.5H11M3 12.5H11" stroke="#606a70" stroke-width="0.9"/></svg>
<div class="t sim" style="left:33px;top:1011px;">Output window</div>
<div class="a" style="left:2505px;top:1012px;width:9px;height:9px;border:1px solid #000;border-top:2px solid #000"></div>
<div class="a" style="left:2530px;top:1012px;width:6px;height:6px;border:1px solid #000;border-top:2px solid #000"></div>
<div class="a" style="left:2528px;top:1015px;width:6px;height:6px;border:1px solid #000;border-top:2px solid #000;background:#f0f0f0"></div>
<svg class="a" style="left:2550px;top:1013px" width="9" height="9"><path d="M1 1L8 8M8 1L1 8" stroke="#000" stroke-width="1.7"/></svg>
<div class="a" style="left:8px;top:1029px;width:2560px;height:326px;background:#fff;border:1px solid #828790;border-top:2px solid #8a8f98"></div>
<div class="a" style="left:9px;top:1031px;width:2540px;height:323px;overflow:hidden">
<div class="t code" style="left:5px;top:-13px;color:#000">406A12: using guessed type int __cdecl mbscpy(_DWORD, _DWORD);</div>
<div class="t code" style="left:5px;top:3px;color:#000">409638: using guessed type int dword_409638;</div>
<div class="t code" style="left:5px;top:19px;color:#000">40561A: using guessed type int sub_40561A();</div>
<div class="t code" style="left:5px;top:35px;color:#000">409638: using guessed type int dword_409638;</div>
<div class="t code" style="left:5px;top:51px;color:#000">406A12: using guessed type int __cdecl mbscpy(_DWORD, _DWORD);</div>
<div class="t code" style="left:5px;top:67px;color:#000">40561A: using guessed type int sub_40561A();</div>
<div class="t code" style="left:5px;top:83px;color:#000">409638: using guessed type int dword_409638;</div>
<div class="t code" style="left:5px;top:99px;color:#000">406A12: using guessed type int __cdecl mbscpy(_DWORD, _DWORD);</div>
<div class="t code" style="left:5px;top:115px;color:#000">40561A: using guessed type int sub_40561A();</div>
<div class="t code" style="left:5px;top:131px;color:#000">409638: using guessed type int dword_409638;</div>
<div class="t code" style="left:5px;top:147px;color:#000">406A12: using guessed type int __cdecl mbscpy(_DWORD, _DWORD);</div>
<div class="t code" style="left:5px;top:163px;color:#000">40561A: using guessed type int sub_40561A();</div>
<div class="t code" style="left:5px;top:179px;color:#000">409638: using guessed type int dword_409638;</div>
<div class="t code" style="left:5px;top:195px;color:#000">405D7C: write access to const memory at 409638 has been detected</div>
<div class="t code" style="left:5px;top:211px;color:#000">40104C: using guessed type int __stdcall lstrlen(_DWORD);</div>
<div class="t code" style="left:5px;top:227px;color:#000">406A12: using guessed type int __cdecl mbscpy(_DWORD, _DWORD);</div>
<div class="t code" style="left:5px;top:243px;color:#000">409638: using guessed type int dword_409638;</div>
<div class="t code" style="left:5px;top:259px;color:#000">405D7C: write access to const memory at 409638 has been detected</div>
<div class="t code" style="left:5px;top:275px;color:#000">40104C: using guessed type int __stdcall lstrlen(_DWORD);</div>
<div class="t code" style="left:5px;top:291px;color:#000">406A12: using guessed type int __cdecl mbscpy(_DWORD, _DWORD);</div>
<div class="t code" style="left:5px;top:307px;color:#000">409638: using guessed type int dword_409638;</div>
</div>
<div class="a" style="left:2551px;top:1031px;width:16px;height:323px;background:#f0f0f0"></div>
<svg class="a" style="left:2554px;top:1037px" width="10" height="7"><path d="M1.5 6L5 2.5L8.5 6" fill="none" stroke="#555" stroke-width="2"/></svg>
<svg class="a" style="left:2554px;top:1343px" width="10" height="7"><path d="M1.5 1L5 4.5L8.5 1" fill="none" stroke="#555" stroke-width="2"/></svg>
<div class="a" style="left:2552px;top:1304px;width:14px;height:33px;background:#cdcdcd"></div>
<div class="a" style="left:2554px;top:1315px;width:9px;height:10px;background:#f0f0f0"></div>
<div class="a" style="left:10px;top:1357px;width:46px;height:21px;background:#e1e1e1;border:1px solid #adadad"></div>
<div class="t sim" style="left:14px;top:1360px;">Python</div>
<div class="a" style="left:60px;top:1357px;width:2506px;height:22px;background:#fff;border:1px solid #7a7a7a"></div>
<div class="t st7" style="left:10px;top:1385px;">AU:  idle</div>
<div class="t st7" style="left:93px;top:1385px;">Down</div>
<div class="t st7" style="left:169px;top:1385px;">Disk: 271GB</div>
<div class="a" style="left:88px;top:1382px;width:1px;height:16px;background:#d5d5d5"></div>
<div class="a" style="left:165px;top:1382px;width:1px;height:16px;background:#d5d5d5"></div>
<div class="a" style="left:247px;top:1382px;width:1px;height:16px;background:#d5d5d5"></div>
<div class="a" style="left:0px;top:1400px;width:2568px;height:8px;background:#222222"></div>
<div class="a" style="left:254px;top:1400px;width:44px;height:8px;background:#4a4a4a"></div>
<div class="a" style="left:298px;top:1400px;width:4px;height:8px;background:#333"></div>
<div class="a" style="left:2563px;top:1400px;width:1px;height:8px;background:#555"></div>
<div class="a" style="left:2440px;top:1400px;width:80px;height:8px;overflow:hidden"><div class="t ui" style="left:19px;top:2px;color:#fff;font-size:12.5px">11:46</div></div>
<div class="a" style="left:0px;top:0px;width:8px;height:162px;background:#000"></div>
<div class="a" style="left:0px;top:162px;width:8px;height:23px;background:#e8e8e8"></div>
<div class="a" style="left:0px;top:185px;width:8px;height:107px;background:#fff"></div>
<div class="a" style="left:0px;top:292px;width:8px;height:909px;background:#f0f0f0"></div>
<div class="a" style="left:0px;top:1201px;width:8px;height:40px;background:#2b2b2b"></div>
<div class="a" style="left:0px;top:1241px;width:8px;height:167px;background:#000"></div>
<div class="a" style="left:0px;top:232px;width:8px;height:1px;background:#e0e0e0"></div>
<div class="a" style="left:0px;top:1230px;width:2px;height:5px;background:#ddd"></div>
</body></html>
